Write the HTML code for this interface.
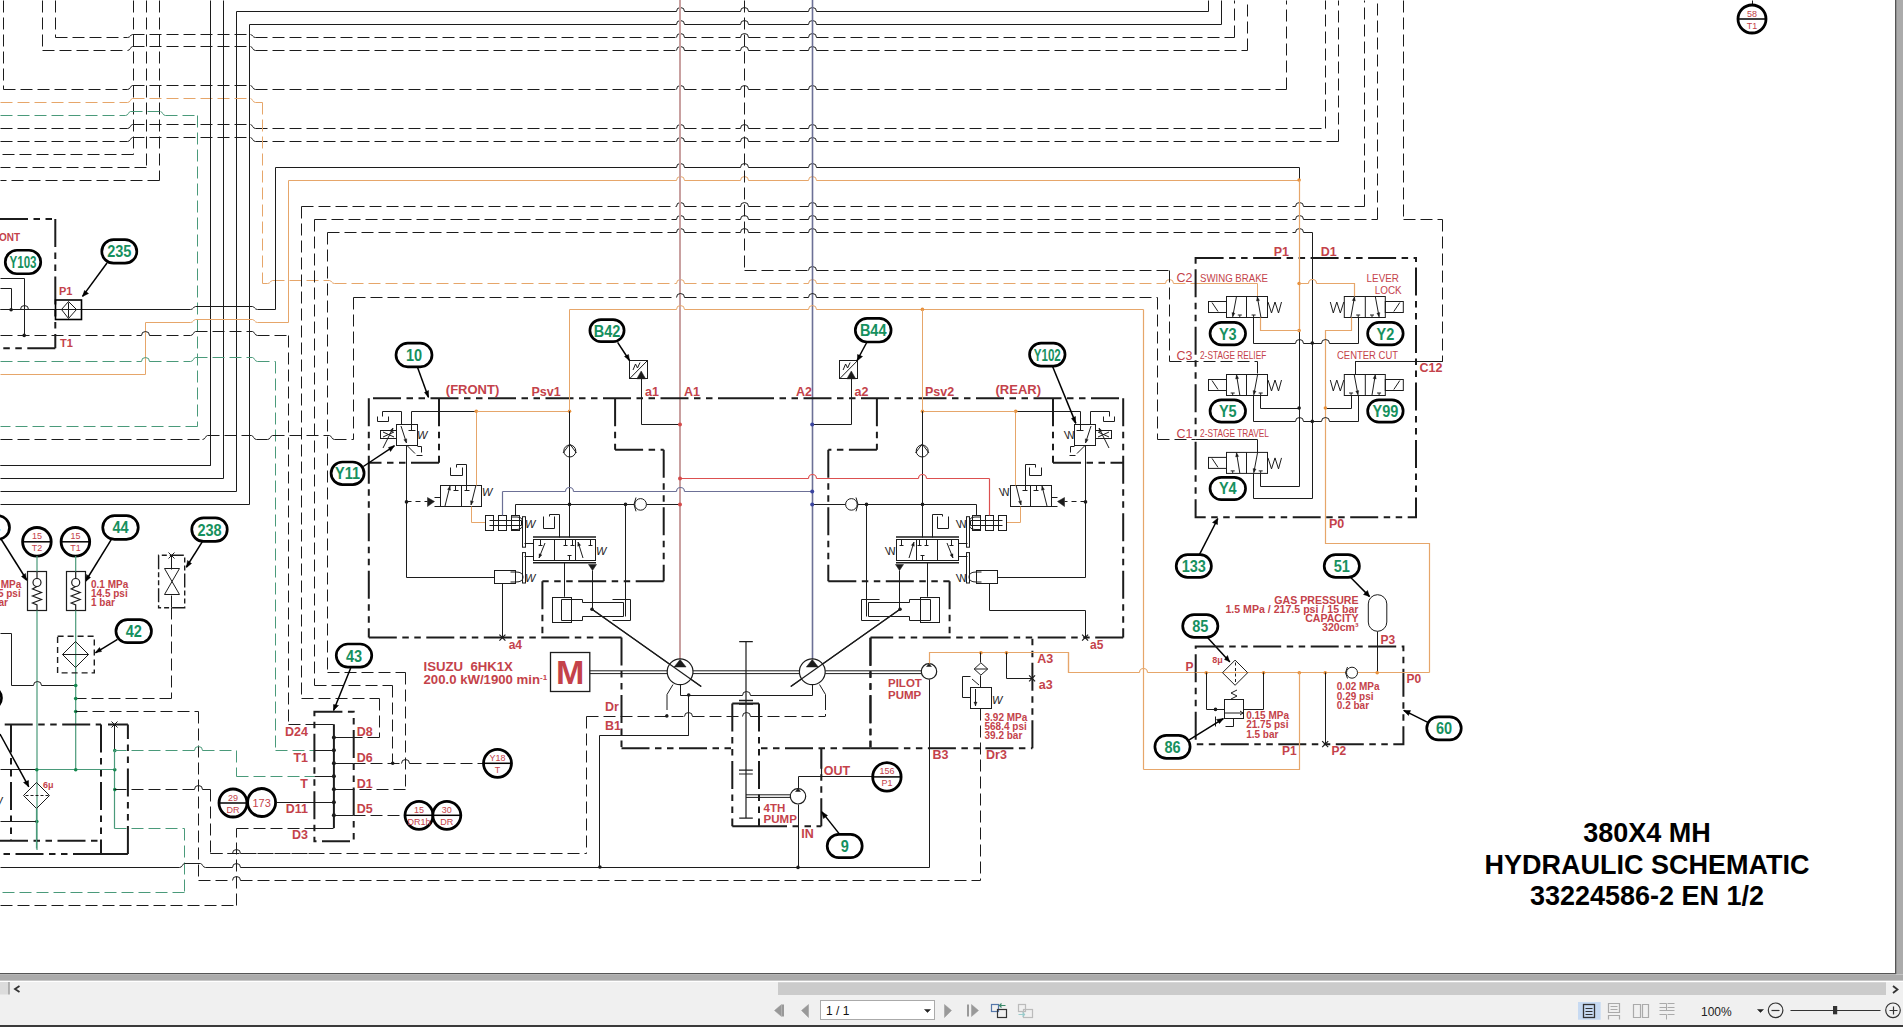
<!DOCTYPE html>
<html><head><meta charset="utf-8"><style>
html,body{margin:0;padding:0;width:1903px;height:1027px;overflow:hidden;background:#fff}
svg{position:absolute;left:0;top:0}
</style></head><body>
<svg width="1903" height="1027" viewBox="0 0 1903 1027">
<path d="M 236.5 11.5 L 676.5 11.5 M 684.5 11.5 L 740.5 11.5 M 748.5 11.5 L 808.5 11.5 M 816.5 11.5 L 1208.5 11.5 M 236.5 11.5 V 491.5 H 0.5 M 1208.5 11.5 V 0.5" stroke="#1c1c1c" stroke-width="1" fill="none"/>
<path d="M 676.5 11.5 A 4 4 0 0 1 684.5 11.5 M 740.5 11.5 A 4 4 0 0 1 748.5 11.5 M 808.5 11.5 A 4 4 0 0 1 816.5 11.5" stroke="#1c1c1c" stroke-width="1" fill="none"/>
<path d="M 249.5 24.5 L 676.5 24.5 M 684.5 24.5 L 740.5 24.5 M 748.5 24.5 L 808.5 24.5 M 816.5 24.5 L 1221.5 24.5 M 249.5 24.5 V 504.5 H 0.5 M 1221.5 24.5 V 0.5" stroke="#1c1c1c" stroke-width="1" fill="none"/>
<path d="M 676.5 24.5 A 4 4 0 0 1 684.5 24.5 M 740.5 24.5 A 4 4 0 0 1 748.5 24.5 M 808.5 24.5 A 4 4 0 0 1 816.5 24.5" stroke="#1c1c1c" stroke-width="1" fill="none"/>
<path d="M55.5 0.5 L55.5 37.5 M55.5 37.5 L127.5 37.5 M132.5 34.5 L250.5 34.5 M255.5 37.5 L676.5 37.5 M684.5 37.5 L740.5 37.5 M748.5 37.5 L808.5 37.5 M816.5 37.5 L1234.5 37.5 M1234.5 37.5 L1234.5 0.5" stroke="#1c1c1c" stroke-width="1" fill="none" stroke-dasharray="12 5"/>
<path d="M 127.5 37.5 C 130.5 37.5 130.5 34.5 132.5 34.5 M 250.5 34.5 C 252.5 34.5 252.5 37.5 255.5 37.5 M 676.5 37.5 A 4 4 0 0 1 684.5 37.5 M 740.5 37.5 A 4 4 0 0 1 748.5 37.5 M 808.5 37.5 A 4 4 0 0 1 816.5 37.5" stroke="#1c1c1c" stroke-width="1" fill="none"/>
<path d="M42.5 0.5 L42.5 50.5 M42.5 50.5 L127.5 50.5 M132.5 46.5 L250.5 46.5 M255.5 50.5 L676.5 50.5 M684.5 50.5 L740.5 50.5 M748.5 50.5 L808.5 50.5 M816.5 50.5 L1247.5 50.5 M1247.5 50.5 L1247.5 0.5" stroke="#1c1c1c" stroke-width="1" fill="none" stroke-dasharray="12 5"/>
<path d="M 127.5 50.5 C 130.5 50.5 130.5 46.5 132.5 46.5 M 250.5 46.5 C 252.5 46.5 252.5 50.5 255.5 50.5 M 676.5 50.5 A 4 4 0 0 1 684.5 50.5 M 740.5 50.5 A 4 4 0 0 1 748.5 50.5 M 808.5 50.5 A 4 4 0 0 1 816.5 50.5" stroke="#1c1c1c" stroke-width="1" fill="none"/>
<path d="M3.5 0.5 L3.5 89.5 M3.5 89.5 L127.5 89.5 M132.5 85.5 L250.5 85.5 M255.5 89.5 L676.5 89.5 M684.5 89.5 L740.5 89.5 M748.5 89.5 L808.5 89.5 M816.5 89.5 L1286.5 89.5 M1286.5 89.5 L1286.5 0.5" stroke="#1c1c1c" stroke-width="1" fill="none" stroke-dasharray="12 5"/>
<path d="M 127.5 89.5 C 130.5 89.5 130.5 85.5 132.5 85.5 M 250.5 85.5 C 252.5 85.5 252.5 89.5 255.5 89.5 M 676.5 89.5 A 4 4 0 0 1 684.5 89.5 M 740.5 89.5 A 4 4 0 0 1 748.5 89.5 M 808.5 89.5 A 4 4 0 0 1 816.5 89.5" stroke="#1c1c1c" stroke-width="1" fill="none"/>
<path d="M0.5 128.5 L127.5 128.5 M132.5 124.5 L250.5 124.5 M255.5 128.5 L676.5 128.5 M684.5 128.5 L740.5 128.5 M748.5 128.5 L808.5 128.5 M816.5 128.5 L1325.5 128.5 M1325.5 128.5 L1325.5 0.5" stroke="#1c1c1c" stroke-width="1" fill="none" stroke-dasharray="12 5"/>
<path d="M 127.5 128.5 C 130.5 128.5 130.5 124.5 132.5 124.5 M 250.5 124.5 C 252.5 124.5 252.5 128.5 255.5 128.5 M 676.5 128.5 A 4 4 0 0 1 684.5 128.5 M 740.5 128.5 A 4 4 0 0 1 748.5 128.5 M 808.5 128.5 A 4 4 0 0 1 816.5 128.5" stroke="#1c1c1c" stroke-width="1" fill="none"/>
<path d="M0.5 141.5 L127.5 141.5 M132.5 137.5 L250.5 137.5 M255.5 141.5 L676.5 141.5 M684.5 141.5 L740.5 141.5 M748.5 141.5 L808.5 141.5 M816.5 141.5 L1338.5 141.5 M1338.5 141.5 L1338.5 0.5" stroke="#1c1c1c" stroke-width="1" fill="none" stroke-dasharray="12 5"/>
<path d="M 127.5 141.5 C 130.5 141.5 130.5 137.5 132.5 137.5 M 250.5 137.5 C 252.5 137.5 252.5 141.5 255.5 141.5 M 676.5 141.5 A 4 4 0 0 1 684.5 141.5 M 740.5 141.5 A 4 4 0 0 1 748.5 141.5 M 808.5 141.5 A 4 4 0 0 1 816.5 141.5" stroke="#1c1c1c" stroke-width="1" fill="none"/>
<path d="M133.5 0.5 L133.5 154.5 M133.5 154.5 L0.5 154.5" stroke="#1c1c1c" stroke-width="1" fill="none" stroke-dasharray="12 5"/>
<path d="M146.5 0.5 L146.5 167.5 M146.5 167.5 L0.5 167.5" stroke="#1c1c1c" stroke-width="1" fill="none" stroke-dasharray="12 5"/>
<path d="M159.5 0.5 L159.5 180.5 M159.5 180.5 L0.5 180.5" stroke="#1c1c1c" stroke-width="1" fill="none" stroke-dasharray="12 5"/>
<path d="M0.5 102.5 L127.5 102.5 M132.5 98.5 L250.5 98.5 M255.5 102.5 L262.5 102.5 M262.5 102.5 L262.5 283.5" stroke="#e6a66a" stroke-width="1" fill="none" stroke-dasharray="12 5"/>
<path d="M 127.5 102.5 C 130.5 102.5 130.5 98.5 132.5 98.5 M 250.5 98.5 C 252.5 98.5 252.5 102.5 255.5 102.5" stroke="#e6a66a" stroke-width="1" fill="none"/>
<path d="M262.5 283.5 L267.5 283.5 M272.5 280.5 L329.5 280.5 M334.5 283.5 L676.5 283.5 M684.5 283.5 L808.5 283.5 M816.5 283.5 L1165.5 283.5 M1173.5 283.5 L1195.5 283.5" stroke="#e6a66a" stroke-width="1" fill="none" stroke-dasharray="12 5"/>
<path d="M 267.5 283.5 C 270.5 283.5 270.5 280.5 272.5 280.5 M 329.5 280.5 C 331.5 280.5 331.5 283.5 334.5 283.5 M 676.5 283.5 A 4 4 0 0 1 684.5 283.5 M 808.5 283.5 A 4 4 0 0 1 816.5 283.5 M 1165.5 283.5 A 4 4 0 0 1 1173.5 283.5" stroke="#e6a66a" stroke-width="1" fill="none"/>
<path d="M 1195.5 283.5 H 1257.5 V 296.5" stroke="#e6a66a" stroke-width="1" fill="none"/>
<path d="M0.5 115.5 L125.5 115.5 M130.5 111.5 L160.5 111.5 M165.5 115.5 L197.5 115.5 M197.5 115.5 L197.5 426.5 M197.5 426.5 L0.5 426.5" stroke="#4a9a7a" stroke-width="1" fill="none" stroke-dasharray="12 5"/>
<path d="M 125.5 115.5 C 128.5 115.5 128.5 111.5 130.5 111.5 M 160.5 111.5 C 162.5 111.5 162.5 115.5 165.5 115.5" stroke="#4a9a7a" stroke-width="1" fill="none"/>
<path d="M 210.5 0.5 V 465.5 H 0.5" stroke="#1c1c1c" stroke-width="1" fill="none"/>
<path d="M 223.5 0.5 V 478.5 H 0.5" stroke="#1c1c1c" stroke-width="1" fill="none"/>
<path d="M 275.5 167.5 L 676.5 167.5 M 684.5 167.5 L 740.5 167.5 M 748.5 167.5 L 808.5 167.5 M 816.5 167.5 L 1299.5 167.5 V 180.5" stroke="#1c1c1c" stroke-width="1" fill="none"/>
<path d="M 676.5 167.5 A 4 4 0 0 1 684.5 167.5 M 740.5 167.5 A 4 4 0 0 1 748.5 167.5 M 808.5 167.5 A 4 4 0 0 1 816.5 167.5" stroke="#1c1c1c" stroke-width="1" fill="none"/>
<path d="M 288.5 180.5 L 676.5 180.5 M 684.5 180.5 L 740.5 180.5 M 748.5 180.5 L 808.5 180.5 M 816.5 180.5 L 1299.5 180.5" stroke="#e6a66a" stroke-width="1" fill="none"/>
<path d="M 676.5 180.5 A 4 4 0 0 1 684.5 180.5 M 740.5 180.5 A 4 4 0 0 1 748.5 180.5 M 808.5 180.5 A 4 4 0 0 1 816.5 180.5" stroke="#e6a66a" stroke-width="1" fill="none"/>
<circle cx="1299.1" cy="180" r="1.8" fill="#e8903a"/>
<path d="M 275.5 167.5 V 309.5" stroke="#1c1c1c" stroke-width="1" fill="none"/>
<path d="M 0.5 309.5 L 190.5 309.5 M 195.5 306.5 L 252.5 306.5 M 257.5 309.5 L 275.5 309.5" stroke="#1c1c1c" stroke-width="1" fill="none"/>
<path d="M 190.5 309.5 C 193.5 309.5 193.5 306.5 195.5 306.5 M 252.5 306.5 C 254.5 306.5 254.5 309.5 257.5 309.5" stroke="#1c1c1c" stroke-width="1" fill="none"/>
<path d="M 288.5 180.5 V 322.5" stroke="#e6a66a" stroke-width="1" fill="none"/>
<path d="M 145.5 322.5 L 190.5 322.5 M 195.5 319.5 L 252.5 319.5 M 257.5 322.5 L 288.5 322.5 M 145.5 322.5 V 374.5 H 0.5" stroke="#e6a66a" stroke-width="1" fill="none"/>
<path d="M 190.5 322.5 C 193.5 322.5 193.5 319.5 195.5 319.5 M 252.5 319.5 C 254.5 319.5 254.5 322.5 257.5 322.5" stroke="#e6a66a" stroke-width="1" fill="none"/>
<path d="M301.5 206.5 L676.5 206.5 M684.5 206.5 L740.5 206.5 M748.5 206.5 L808.5 206.5 M816.5 206.5 L1295.5 206.5 M1303.5 206.5 L1364.5 206.5 M1364.5 206.5 L1364.5 0.5 M301.5 206.5 L301.5 698.5 M301.5 698.5 L379.5 698.5 M379.5 698.5 L379.5 737.5 M379.5 737.5 L353.5 737.5" stroke="#1c1c1c" stroke-width="1" fill="none" stroke-dasharray="12 5"/>
<path d="M 676.5 206.5 A 4 4 0 0 1 684.5 206.5 M 740.5 206.5 A 4 4 0 0 1 748.5 206.5 M 808.5 206.5 A 4 4 0 0 1 816.5 206.5 M 1295.5 206.5 A 4 4 0 0 1 1303.5 206.5" stroke="#1c1c1c" stroke-width="1" fill="none"/>
<path d="M314.5 219.5 L676.5 219.5 M684.5 219.5 L740.5 219.5 M748.5 219.5 L808.5 219.5 M816.5 219.5 L1295.5 219.5 M1303.5 219.5 L1377.5 219.5 M1377.5 219.5 L1377.5 0.5 M314.5 219.5 L314.5 685.5 M314.5 685.5 L392.5 685.5 M392.5 685.5 L392.5 763.5" stroke="#1c1c1c" stroke-width="1" fill="none" stroke-dasharray="12 5"/>
<path d="M 676.5 219.5 A 4 4 0 0 1 684.5 219.5 M 740.5 219.5 A 4 4 0 0 1 748.5 219.5 M 808.5 219.5 A 4 4 0 0 1 816.5 219.5 M 1295.5 219.5 A 4 4 0 0 1 1303.5 219.5" stroke="#1c1c1c" stroke-width="1" fill="none"/>
<path d="M327.5 232.5 L676.5 232.5 M684.5 232.5 L740.5 232.5 M748.5 232.5 L808.5 232.5 M816.5 232.5 L1295.5 232.5 M1303.5 232.5 L1312.5 232.5 M327.5 232.5 L327.5 672.5 M327.5 672.5 L405.5 672.5 M405.5 672.5 L405.5 789.5 M405.5 789.5 L353.5 789.5" stroke="#1c1c1c" stroke-width="1" fill="none" stroke-dasharray="12 5"/>
<path d="M 676.5 232.5 A 4 4 0 0 1 684.5 232.5 M 740.5 232.5 A 4 4 0 0 1 748.5 232.5 M 808.5 232.5 A 4 4 0 0 1 816.5 232.5 M 1295.5 232.5 A 4 4 0 0 1 1303.5 232.5" stroke="#1c1c1c" stroke-width="1" fill="none"/>
<path d="M1403.5 0.5 L1403.5 219.5 M1403.5 219.5 L1442.5 219.5 M1442.5 219.5 L1442.5 361.5 M1442.5 361.5 L1355.5 361.5 M1355.5 361.5 L1355.5 374.5" stroke="#1c1c1c" stroke-width="1" fill="none" stroke-dasharray="12 5"/>
<path d="M744.5 0.5 L744.5 270.5 M744.5 270.5 L808.5 270.5 M816.5 270.5 L1169.5 270.5 M1169.5 270.5 L1169.5 361.5 M1169.5 361.5 L1257.5 361.5 M1257.5 361.5 L1257.5 374.5" stroke="#1c1c1c" stroke-width="1" fill="none" stroke-dasharray="12 5"/>
<path d="M 808.5 270.5 A 4 4 0 0 1 816.5 270.5" stroke="#1c1c1c" stroke-width="1" fill="none"/>
<path d="M680 0 V659" stroke="#c9a0a0" stroke-width="2" fill="none"/>
<path d="M812.5 0 V659" stroke="#6c7096" stroke-width="1.6" fill="none"/>
<path d="M353.5 297.5 L676.5 297.5 M684.5 297.5 L808.5 297.5 M816.5 297.5 L1157.5 297.5 M1157.5 297.5 L1157.5 439.5 M1157.5 439.5 L1195.5 439.5 M353.5 297.5 L353.5 439.5" stroke="#1c1c1c" stroke-width="1" fill="none" stroke-dasharray="12 5"/>
<path d="M 676.5 297.5 A 4 4 0 0 1 684.5 297.5 M 808.5 297.5 A 4 4 0 0 1 816.5 297.5" stroke="#1c1c1c" stroke-width="1" fill="none"/>
<path d="M 569.5 309.5 L 676.5 309.5 M 684.5 309.5 L 808.5 309.5 M 816.5 309.5 L 1143.5 309.5" stroke="#e6a66a" stroke-width="1" fill="none"/>
<path d="M 676.5 309.5 A 4 4 0 0 1 684.5 309.5 M 808.5 309.5 A 4 4 0 0 1 816.5 309.5" stroke="#e6a66a" stroke-width="1" fill="none"/>
<circle cx="922.4" cy="309.4" r="1.8" fill="#e8903a"/>
<path d="M0.5 335.5 L141.5 335.5 M149.5 335.5 L190.5 335.5 M195.5 331.5 L252.5 331.5 M257.5 335.5 L288.5 335.5 M288.5 335.5 L288.5 724.5 M288.5 724.5 L314.5 724.5" stroke="#1c1c1c" stroke-width="1" fill="none" stroke-dasharray="12 5"/>
<path d="M 141.5 335.5 A 4 4 0 0 1 149.5 335.5 M 190.5 335.5 C 193.5 335.5 193.5 331.5 195.5 331.5 M 252.5 331.5 C 254.5 331.5 254.5 335.5 257.5 335.5" stroke="#1c1c1c" stroke-width="1" fill="none"/>
<path d="M0.5 361.5 L141.5 361.5 M149.5 361.5 L190.5 361.5 M195.5 357.5 L252.5 357.5 M257.5 361.5 L275.5 361.5 M275.5 361.5 L275.5 750.5 M275.5 750.5 L314.5 750.5" stroke="#4a9a7a" stroke-width="1" fill="none" stroke-dasharray="12 5"/>
<path d="M 141.5 361.5 A 4 4 0 0 1 149.5 361.5 M 190.5 361.5 C 193.5 361.5 193.5 357.5 195.5 357.5 M 252.5 357.5 C 254.5 357.5 254.5 361.5 257.5 361.5" stroke="#4a9a7a" stroke-width="1" fill="none"/>
<path d="M0.5 439.5 L202.5 439.5 M207.5 435.5 L251.5 435.5 M256.5 439.5 L267.5 439.5 M272.5 435.5 L329.5 435.5 M334.5 439.5 L353.5 439.5" stroke="#1c1c1c" stroke-width="1" fill="none" stroke-dasharray="12 5"/>
<path d="M 202.5 439.5 C 205.5 439.5 205.5 435.5 207.5 435.5 M 251.5 435.5 C 253.5 435.5 253.5 439.5 256.5 439.5 M 267.5 439.5 C 270.5 439.5 270.5 435.5 272.5 435.5 M 329.5 435.5 C 331.5 435.5 331.5 439.5 334.5 439.5" stroke="#1c1c1c" stroke-width="1" fill="none"/>
<path d="M 1752.5 0.5 V 5.5" stroke="#1c1c1c" stroke-width="1" fill="none"/>
<circle cx="1752" cy="19" r="14" stroke="#000" stroke-width="2.8" fill="#fff"/>
<path d="M1738 19 H1766" stroke="#000" stroke-width="1.5" fill="none"/>
<text x="1752" y="16.5" fill="#c4424a" text-anchor="middle" style="font-family:&quot;Liberation Sans&quot;,sans-serif;font-size:9px;font-weight:normal">58</text>
<text x="1752" y="28.5" fill="#c4424a" text-anchor="middle" style="font-family:&quot;Liberation Sans&quot;,sans-serif;font-size:9px;font-weight:normal">T1</text>
<path d="M0 219 L55.3 219 M55.3 219 L55.3 348.3 M55.3 348.3 L0 348.3" stroke="#1c1c1c" stroke-width="2" fill="none" stroke-dasharray="28 5.5 6.5 5.5 6.5 5.5"/>
<text x="-1" y="241" fill="#c4424a" text-anchor="start" style="font-family:&quot;Liberation Sans&quot;,sans-serif;font-size:10px;font-weight:bold">ONT</text>
<rect x="5.25" y="250.25" width="35.5" height="23.5" rx="11.75" ry="11.75" stroke="#000" stroke-width="2.7" fill="#fff"/>
<text x="23" y="267.9" fill="#16905e" text-anchor="middle" textLength="27" lengthAdjust="spacingAndGlyphs" style="font-family:&quot;Liberation Sans&quot;,sans-serif;font-size:16.5px;font-weight:bold">Y103</text>
<rect x="101.8" y="239.6" width="35" height="23.6" rx="11.8" ry="11.8" stroke="#000" stroke-width="2.7" fill="#fff"/>
<text x="119.3" y="257.3" fill="#16905e" text-anchor="middle" textLength="24.22" lengthAdjust="spacingAndGlyphs" style="font-family:&quot;Liberation Sans&quot;,sans-serif;font-size:16.5px;font-weight:bold">235</text>
<path d="M107 263 L82.5 296.4" stroke="#000" stroke-width="1.5" fill="none"/>
<path d="M 82.5 296.5 L 84.5 290.5 L 88.5 293.5 Z" stroke="#000" stroke-width="0.5" fill="#000"/>
<text x="59" y="295" fill="#c4424a" text-anchor="start" style="font-family:&quot;Liberation Sans&quot;,sans-serif;font-size:11px;font-weight:bold">P1</text>
<text x="60" y="347" fill="#c4424a" text-anchor="start" style="font-family:&quot;Liberation Sans&quot;,sans-serif;font-size:11px;font-weight:bold">T1</text>
<rect x="55.5" y="300" width="26" height="19.5" stroke="#000" stroke-width="1.6" fill="none"/>
<path d="M 68.5 301.5 L 76.5 309.5 L 68.5 318.5 L 61.5 309.5 Z M 68.5 302.5 V 317.5" stroke="#1c1c1c" stroke-width="1" fill="none"/>
<path d="M 0.5 309.5 L 20.5 309.5 M 28.5 309.5 L 55.5 309.5" stroke="#1c1c1c" stroke-width="1" fill="none"/>
<path d="M 20.5 309.5 A 4 4 0 0 1 28.5 309.5" stroke="#1c1c1c" stroke-width="1" fill="none"/>
<path d="M 0.5 288.5 H 11.5 V 309.5 M 0.5 278.5 H 24.5 V 335.5" stroke="#1c1c1c" stroke-width="1" fill="none"/>
<circle cx="11.1" cy="309.7" r="1.8" fill="#1c1c1c"/>
<circle cx="24.2" cy="335.4" r="1.8" fill="#1c1c1c"/>
<path d="M 0.5 465.5 H 210.5" stroke="#1c1c1c" stroke-width="1" fill="none"/>
<rect x="-25.5" y="515.7" width="35" height="23.6" rx="11.8" ry="11.8" stroke="#000" stroke-width="2.7" fill="#fff"/>
<text x="-8" y="533.4" fill="#16905e" text-anchor="middle" textLength="16.15" lengthAdjust="spacingAndGlyphs" style="font-family:&quot;Liberation Sans&quot;,sans-serif;font-size:16.5px;font-weight:bold">34</text>
<path d="M1 539 L26.8 580" stroke="#000" stroke-width="1.5" fill="none"/>
<path d="M 26.5 580.5 L 21.5 576.5 L 25.5 573.5 Z" stroke="#000" stroke-width="0.5" fill="#000"/>
<circle cx="36.9" cy="541.8" r="14.3" stroke="#000" stroke-width="2.8" fill="#fff"/>
<path d="M22.6 541.8 H51.2" stroke="#000" stroke-width="1.5" fill="none"/>
<text x="36.9" y="539.3" fill="#c4424a" text-anchor="middle" style="font-family:&quot;Liberation Sans&quot;,sans-serif;font-size:9px;font-weight:normal">15</text>
<text x="36.9" y="551.3" fill="#c4424a" text-anchor="middle" style="font-family:&quot;Liberation Sans&quot;,sans-serif;font-size:9px;font-weight:normal">T2</text>
<circle cx="75.4" cy="541.8" r="14.3" stroke="#000" stroke-width="2.8" fill="#fff"/>
<path d="M61.1 541.8 H89.7" stroke="#000" stroke-width="1.5" fill="none"/>
<text x="75.4" y="539.3" fill="#c4424a" text-anchor="middle" style="font-family:&quot;Liberation Sans&quot;,sans-serif;font-size:9px;font-weight:normal">15</text>
<text x="75.4" y="551.3" fill="#c4424a" text-anchor="middle" style="font-family:&quot;Liberation Sans&quot;,sans-serif;font-size:9px;font-weight:normal">T1</text>
<rect x="102.75" y="515.7" width="35.5" height="23.6" rx="11.8" ry="11.8" stroke="#000" stroke-width="2.7" fill="#fff"/>
<text x="120.5" y="533.4" fill="#16905e" text-anchor="middle" textLength="16.15" lengthAdjust="spacingAndGlyphs" style="font-family:&quot;Liberation Sans&quot;,sans-serif;font-size:16.5px;font-weight:bold">44</text>
<path d="M111.4 539.3 L85.7 581" stroke="#000" stroke-width="1.5" fill="none"/>
<path d="M 85.5 581.5 L 86.5 574.5 L 90.5 577.5 Z" stroke="#000" stroke-width="0.5" fill="#000"/>
<rect x="191.75" y="517.8" width="35.5" height="23.6" rx="11.8" ry="11.8" stroke="#000" stroke-width="2.7" fill="#fff"/>
<text x="209.5" y="535.5" fill="#16905e" text-anchor="middle" textLength="24.22" lengthAdjust="spacingAndGlyphs" style="font-family:&quot;Liberation Sans&quot;,sans-serif;font-size:16.5px;font-weight:bold">238</text>
<path d="M202.5 541.4 L186.4 567" stroke="#000" stroke-width="1.5" fill="none"/>
<path d="M 186.5 567.5 L 187.5 560.5 L 191.5 563.5 Z" stroke="#000" stroke-width="0.5" fill="#000"/>
<rect x="27.5" y="571.5" width="19" height="39" stroke="#1c1c1c" stroke-width="1.2" fill="none"/>
<circle cx="37" cy="582.5" r="4" stroke="#1c1c1c" stroke-width="1.2" fill="none"/>
<path d="M37 571.5 V578.5 M37 586.5 L32.5 589 L41.5 592.5 L32.5 596 L41.5 599.5 L32.5 603 L37 605 V610.5" stroke="#1c1c1c" stroke-width="1.2" fill="none"/>
<path d="M37 556 V571.5 M37 610.5 V850" stroke="#4a9a7a" stroke-width="1.2" fill="none"/>
<rect x="66.5" y="571.5" width="19" height="39" stroke="#1c1c1c" stroke-width="1.2" fill="none"/>
<circle cx="75.7" cy="582.5" r="4" stroke="#1c1c1c" stroke-width="1.2" fill="none"/>
<path d="M75.7 571.5 V578.5 M75.7 586.5 L71.2 589 L80.2 592.5 L71.2 596 L80.2 599.5 L71.2 603 L75.7 605 V610.5" stroke="#1c1c1c" stroke-width="1.2" fill="none"/>
<path d="M75.7 556 V571.5 M75.7 610.5 V769.8" stroke="#4a9a7a" stroke-width="1.2" fill="none"/>
<text x="91" y="588" fill="#c4424a" text-anchor="start" style="font-family:&quot;Liberation Sans&quot;,sans-serif;font-size:10px;font-weight:bold">0.1 MPa</text>
<text x="-16" y="588" fill="#c4424a" text-anchor="start" style="font-family:&quot;Liberation Sans&quot;,sans-serif;font-size:10px;font-weight:bold">0.1 MPa</text>
<text x="91" y="597.2" fill="#c4424a" text-anchor="start" style="font-family:&quot;Liberation Sans&quot;,sans-serif;font-size:10px;font-weight:bold">14.5 psi</text>
<text x="-16" y="597.2" fill="#c4424a" text-anchor="start" style="font-family:&quot;Liberation Sans&quot;,sans-serif;font-size:10px;font-weight:bold">14.5 psi</text>
<text x="91" y="606.4" fill="#c4424a" text-anchor="start" style="font-family:&quot;Liberation Sans&quot;,sans-serif;font-size:10px;font-weight:bold">1 bar</text>
<text x="-16" y="606.4" fill="#c4424a" text-anchor="start" style="font-family:&quot;Liberation Sans&quot;,sans-serif;font-size:10px;font-weight:bold">1 bar</text>
<path d="M158.6 555.3 V607.8 H184.7 V555.3 Z" stroke="#1c1c1c" stroke-width="1.4" fill="none" stroke-dasharray="14 3 5 3 5 3"/>
<path d="M 164.5 568.5 H 179.5 L 164.5 594.5 H 179.5 Z" stroke="#1c1c1c" stroke-width="1" fill="none"/>
<path d="M 171.5 555.5 V 569.5 M 171.5 595.5 V 607.5" stroke="#1c1c1c" stroke-width="1" fill="none"/>
<path d="M 168.5 552.5 L 174.5 558.5 M 174.5 552.5 L 168.5 558.5" stroke="#1c1c1c" stroke-width="1" fill="none"/>
<path d="M171.5 607.5 L171.5 698.5 M171.5 698.5 L75.5 698.5" stroke="#1c1c1c" stroke-width="1" fill="none" stroke-dasharray="12 5"/>
<path d="M57.6 636.3 H94.3 V672.9 H57.6 Z" stroke="#1c1c1c" stroke-width="1.4" fill="none" stroke-dasharray="6 4"/>
<path d="M 75.5 641.5 L 88.5 654.5 L 75.5 667.5 L 62.5 654.5 Z M 62.5 654.5 H 88.5" stroke="#1c1c1c" stroke-width="1" fill="none"/>
<rect x="115.95" y="619.7" width="35.5" height="23" rx="11.5" ry="11.5" stroke="#000" stroke-width="2.7" fill="#fff"/>
<text x="133.7" y="637.1" fill="#16905e" text-anchor="middle" textLength="16.15" lengthAdjust="spacingAndGlyphs" style="font-family:&quot;Liberation Sans&quot;,sans-serif;font-size:16.5px;font-weight:bold">42</text>
<path d="M117.5 639.4 L95.4 652.8" stroke="#000" stroke-width="1.5" fill="none"/>
<path d="M 95.5 652.5 L 99.5 647.5 L 101.5 651.5 Z" stroke="#000" stroke-width="0.5" fill="#000"/>
<path d="M 0.5 633.5 H 11.5 V 685.5 L 33.5 685.5 M 41.5 685.5 L 75.5 685.5" stroke="#1c1c1c" stroke-width="1" fill="none"/>
<path d="M 33.5 685.5 A 4 4 0 0 1 41.5 685.5" stroke="#1c1c1c" stroke-width="1" fill="none"/>
<circle cx="75.7" cy="685.5" r="1.8" fill="#15884f"/>
<circle cx="75.7" cy="698.6" r="1.8" fill="#15884f"/>
<circle cx="75.7" cy="711.5" r="1.8" fill="#15884f"/>
<path d="M75.5 711.5 L198.5 711.5 M198.5 711.5 L198.5 880.5" stroke="#1c1c1c" stroke-width="1" fill="none" stroke-dasharray="12 5"/>
<path d="M4.7 724.6 L101 724.6 M101 724.6 L101 853.9 M101 853.9 L0 853.9" stroke="#1c1c1c" stroke-width="2" fill="none" stroke-dasharray="28 5.5 6.5 5.5 6.5 5.5"/>
<path d="M11 724.6 L11 840.8" stroke="#1c1c1c" stroke-width="2" fill="none" stroke-dasharray="28 5.5 6.5 5.5 6.5 5.5"/>
<path d="M0 840.8 L101 840.8" stroke="#1c1c1c" stroke-width="2" fill="none" stroke-dasharray="28 5.5 6.5 5.5 6.5 5.5"/>
<path d="M101 853.9 L127.9 853.9 M127.9 853.9 L127.9 724.6 M127.9 724.6 L108 724.6" stroke="#1c1c1c" stroke-width="2" fill="none" stroke-dasharray="28 5.5 6.5 5.5 6.5 5.5"/>
<path d="M 111.5 721.5 L 117.5 727.5 M 117.5 721.5 L 111.5 727.5 M 114.5 724.5 V 750.5" stroke="#1c1c1c" stroke-width="1" fill="none"/>
<path d="M 0.5 769.5 H 36.5" stroke="#1c1c1c" stroke-width="1" fill="none"/>
<path d="M 36.5 769.5 H 114.5 V 828.5" stroke="#4a9a7a" stroke-width="1.2" fill="none"/>
<circle cx="36.8" cy="769.8" r="1.8" fill="#15884f"/>
<circle cx="75.7" cy="769.8" r="1.8" fill="#15884f"/>
<circle cx="114.8" cy="750.6" r="1.8" fill="#15884f"/>
<circle cx="114.8" cy="769.8" r="1.8" fill="#15884f"/>
<circle cx="114.8" cy="789.6" r="1.8" fill="#15884f"/>
<path d="M 114.5 750.5 V 769.5" stroke="#4a9a7a" stroke-width="1.2" fill="none"/>
<path d="M114.5 750.5 L194.5 750.5 M202.5 750.5 L236.5 750.5 M236.5 750.5 L236.5 776.5 M236.5 776.5 L314.5 776.5" stroke="#4a9a7a" stroke-width="1" fill="none" stroke-dasharray="12 5"/>
<path d="M 194.5 750.5 A 4 4 0 0 1 202.5 750.5" stroke="#4a9a7a" stroke-width="1" fill="none"/>
<path d="M114.5 828.5 L184.5 828.5 M184.5 828.5 L184.5 892.5 M184.5 892.5 L0.5 892.5" stroke="#4a9a7a" stroke-width="1" fill="none" stroke-dasharray="12 5"/>
<path d="M 36.5 782.5 L 49.5 795.5 L 36.5 808.5 L 23.5 795.5 Z" stroke="#1c1c1c" stroke-width="1" fill="none"/>
<path d="M25.5 795.5 L48.5 795.5" stroke="#1c1c1c" stroke-width="1" fill="none" stroke-dasharray="3 2"/>
<text x="43" y="788" fill="#c4424a" text-anchor="start" style="font-family:&quot;Liberation Sans&quot;,sans-serif;font-size:9px;font-weight:bold">6μ</text>
<circle cx="36.8" cy="821.5" r="1.8" fill="#15884f"/>
<path d="M 0.5 821.5 H 36.5" stroke="#1c1c1c" stroke-width="1" fill="none"/>
<path d="M 36.5 808.5 V 848.5" stroke="#4a9a7a" stroke-width="1.2" fill="none"/>
<path d="M0 734 L28.8 786.8" stroke="#000" stroke-width="1.5" fill="none"/>
<path d="M 28.5 786.5 L 23.5 782.5 L 28.5 780.5 Z" stroke="#000" stroke-width="0.5" fill="#000"/>
<path d="M114.5 789.5 L194.5 789.5 M202.5 789.5 L210.5 789.5 M210.5 789.5 L210.5 853.5 M210.5 853.5 L232.5 853.5 M240.5 853.5 L320.5 853.5" stroke="#1c1c1c" stroke-width="1" fill="none" stroke-dasharray="12 5"/>
<path d="M 194.5 789.5 A 4 4 0 0 1 202.5 789.5 M 232.5 853.5 A 4 4 0 0 1 240.5 853.5" stroke="#1c1c1c" stroke-width="1" fill="none"/>
<path d="M198.5 880.5 L232.5 880.5 M240.5 880.5 L980.5 880.5" stroke="#1c1c1c" stroke-width="1" fill="none" stroke-dasharray="12 5"/>
<path d="M 232.5 880.5 A 4 4 0 0 1 240.5 880.5" stroke="#1c1c1c" stroke-width="1" fill="none"/>
<path d="M0.5 905.5 L236.5 905.5 M236.5 905.5 L236.5 828.5 M236.5 828.5 L314.5 828.5" stroke="#1c1c1c" stroke-width="1" fill="none" stroke-dasharray="12 5"/>
<circle cx="233" cy="803" r="14" stroke="#000" stroke-width="2.8" fill="#fff"/>
<path d="M219 803 H247" stroke="#000" stroke-width="1.5" fill="none"/>
<text x="233" y="800.5" fill="#c4424a" text-anchor="middle" style="font-family:&quot;Liberation Sans&quot;,sans-serif;font-size:9px;font-weight:normal">29</text>
<text x="233" y="812.5" fill="#c4424a" text-anchor="middle" style="font-family:&quot;Liberation Sans&quot;,sans-serif;font-size:9px;font-weight:normal">DR</text>
<circle cx="261.6" cy="802.5" r="14" stroke="#000" stroke-width="2.8" fill="#fff"/>
<text x="261.6" y="806.5" fill="#c4424a" text-anchor="middle" style="font-family:&quot;Liberation Sans&quot;,sans-serif;font-size:11px;font-weight:normal">173</text>
<path d="M 276.5 802.5 H 334.5" stroke="#1c1c1c" stroke-width="1" fill="none"/>
<rect x="-33.5" y="686.5" width="35" height="23" rx="11.5" ry="11.5" stroke="#000" stroke-width="2.7" fill="#fff"/>
<text x="-8" y="804.5" fill="#1c1c1c" style="font-family:&quot;Liberation Sans&quot;,sans-serif;font-size:11px;font-style:italic">W</text>
<path d="M746 398.2 L368.8 398.2 M368.8 398.2 L368.8 637.6 M368.8 637.6 L621.5 637.6 M621.5 637.6 L621.5 748.3 M621.5 748.3 L731.7 748.3" stroke="#1c1c1c" stroke-width="2" fill="none" stroke-dasharray="28 5.5 6.5 5.5 6.5 5.5"/>
<path d="M439 398.2 L439 462.7 M439 462.7 L368.8 462.7" stroke="#1c1c1c" stroke-width="2" fill="none" stroke-dasharray="28 5.5 6.5 5.5 6.5 5.5"/>
<path d="M615.1 398.2 L615.1 449.8 M615.1 449.8 L663.7 449.8 M663.7 449.8 L663.7 581.2 M663.7 581.2 L542.4 581.2 M542.4 581.2 L542.4 637.6" stroke="#1c1c1c" stroke-width="2" fill="none" stroke-dasharray="28 5.5 6.5 5.5 6.5 5.5"/>
<path d="M 377.5 416.5 V 421.5 H 388.5 V 416.5" stroke="#1c1c1c" stroke-width="1" fill="none"/>
<path d="M 382.5 416.5 V 411.5 H 401.5 V 424.5" stroke="#1c1c1c" stroke-width="1" fill="none"/>
<path d="M 411.5 430.5 V 411.5 H 476.5" stroke="#1c1c1c" stroke-width="1" fill="none"/>
<path d="M 408.5 430.5 H 415.5" stroke="#1c1c1c" stroke-width="1" fill="none"/>
<rect x="396.5" y="424.5" width="21" height="21" stroke="#1c1c1c" stroke-width="1" fill="none"/>
<rect x="380.5" y="430.5" width="16" height="8" stroke="#1c1c1c" stroke-width="1" fill="none"/>
<path d="M383 432 L394 437 M394 432 L383 437" stroke="#1c1c1c" stroke-width="1" fill="none"/>
<path d="M383 448 L393 428" stroke="#1c1c1c" stroke-width="1" fill="none"/>
<path d="M393 428 L392.64 432.29 L389.78 430.86Z" stroke="#1c1c1c" stroke-width="0.3" fill="#1c1c1c"/>
<path d="M401 426 L406.5 443" stroke="#1c1c1c" stroke-width="1" fill="none"/>
<path d="M406.5 443 L403.75 439.69 L406.79 438.7Z" stroke="#1c1c1c" stroke-width="0.3" fill="#1c1c1c"/>
<path d="M406.5 445 L415 453.5" stroke="#1c1c1c" stroke-width="1" fill="none"/>
<path d="M 417.5 446.5 H 421.5 V 452.5 M 416.5 455.5 H 422.5" stroke="#1c1c1c" stroke-width="1" fill="none"/>
<text x="417" y="438.5" fill="#1c1c1c" style="font-family:&quot;Liberation Sans&quot;,sans-serif;font-size:11.0px;font-style:italic">W</text>
<path d="M 406.5 445.5 V 577.5 H 494.5" stroke="#1c1c1c" stroke-width="1" fill="none"/>
<circle cx="406.5" cy="501.9" r="1.8" fill="#1c1c1c"/>
<path d="M 450.5 467.5 V 475.5 H 462.5 V 467.5" stroke="#1c1c1c" stroke-width="1" fill="none"/>
<path d="M 456.5 467.5 V 464.5 H 466.5 V 485.5" stroke="#1c1c1c" stroke-width="1" fill="none"/>
<rect x="440.5" y="485.5" width="41" height="21" stroke="#1c1c1c" stroke-width="1" fill="none"/>
<path d="M 461.5 485.5 V 506.5" stroke="#1c1c1c" stroke-width="1" fill="none"/>
<path d="M445 506 L450 486" stroke="#1c1c1c" stroke-width="1" fill="none"/>
<path d="M450 486 L450.58 490.27 L447.48 489.49Z" stroke="#1c1c1c" stroke-width="0.3" fill="#1c1c1c"/>
<path d="M476 485 L471 505" stroke="#1c1c1c" stroke-width="1" fill="none"/>
<path d="M471 505 L470.42 500.73 L473.52 501.51Z" stroke="#1c1c1c" stroke-width="0.3" fill="#1c1c1c"/>
<path d="M 455.5 485.5 V 490.5 M 453.5 490.5 H 458.5 M 466.5 485.5 V 490.5 M 464.5 490.5 H 469.5" stroke="#1c1c1c" stroke-width="1" fill="none"/>
<text x="482" y="496" fill="#1c1c1c" style="font-family:&quot;Liberation Sans&quot;,sans-serif;font-size:11.0px;font-style:italic">W</text>
<path d="M406.5 501.5 L427.5 501.5" stroke="#1c1c1c" stroke-width="1" fill="none" stroke-dasharray="5 4"/>
<path d="M 427.5 497.5 L 434.5 501.5 L 427.5 506.5 Z" stroke="#1c1c1c" stroke-width="0.5" fill="#1c1c1c"/>
<path d="M 434.5 497.5 H 440.5 M 434.5 506.5 H 440.5" stroke="#1c1c1c" stroke-width="1" fill="none"/>
<path d="M 476.5 411.5 V 485.5" stroke="#e6a66a" stroke-width="1" fill="none"/>
<path d="M 471.5 506.5 V 522.5 H 485.5" stroke="#e6a66a" stroke-width="1" fill="none"/>
<circle cx="476.3" cy="411.3" r="1.8" fill="#e8903a"/>
<path d="M 476.5 411.5 H 569.5" stroke="#e6a66a" stroke-width="1" fill="none"/>
<circle cx="569.5" cy="411.3" r="1.8" fill="#e8903a"/>
<path d="M 569.5 309.5 V 411.5" stroke="#e6a66a" stroke-width="1" fill="none"/>
<rect x="485.5" y="515.5" width="8" height="15" stroke="#1c1c1c" stroke-width="1" fill="none"/>
<rect x="498.5" y="515.5" width="8" height="15" stroke="#1c1c1c" stroke-width="1" fill="none"/>
<rect x="511.5" y="515.5" width="8" height="15" stroke="#1c1c1c" stroke-width="1" fill="none"/>
<path d="M 489.5 520.5 H 521.5 V 525.5 H 489.5" stroke="#1c1c1c" stroke-width="1" fill="none"/>
<path d="M511 517 H517 Q523 517 523 523 Q523 529.5 517 529.5 H511" stroke="#1c1c1c" stroke-width="1" fill="none"/>
<text x="525" y="528" fill="#1c1c1c" style="font-family:&quot;Liberation Sans&quot;,sans-serif;font-size:11.0px;font-style:italic">W</text>
<rect x="522.5" y="516.7" width="3" height="30.5" fill="#fff" stroke="#1c1c1c" stroke-width="1"/>
<rect x="522.5" y="552.6" width="3" height="30.4" fill="#fff" stroke="#1c1c1c" stroke-width="1"/>
<path d="M 524.5 543.5 H 533.5 M 524.5 556.5 H 533.5" stroke="#1c1c1c" stroke-width="1" fill="none"/>
<rect x="533.5" y="539.5" width="62" height="21" stroke="#1c1c1c" stroke-width="1" fill="none"/>
<path d="M 554.5 539.5 V 560.5 M 575.5 539.5 V 560.5" stroke="#1c1c1c" stroke-width="1" fill="none"/>
<path d="M533 537 H596 M533 562.8 H596" stroke="#1c1c1c" stroke-width="1.6" fill="none"/>
<path d="M545 543 L539 558" stroke="#1c1c1c" stroke-width="1" fill="none"/>
<path d="M539 558 L539 553.69 L541.97 554.88Z" stroke="#1c1c1c" stroke-width="0.3" fill="#1c1c1c"/>
<path d="M583 558 L578 542" stroke="#1c1c1c" stroke-width="1" fill="none"/>
<path d="M578 542 L580.72 545.34 L577.67 546.3Z" stroke="#1c1c1c" stroke-width="0.3" fill="#1c1c1c"/>
<path d="M 538.5 545.5 H 542.5 M 540.5 539.5 V 545.5 M 563.5 545.5 H 567.5 M 565.5 539.5 V 545.5 M 570.5 545.5 H 574.5 M 572.5 539.5 V 545.5 M 567.5 555.5 H 571.5 M 569.5 555.5 V 560.5 M 588.5 545.5 H 592.5 M 590.5 539.5 V 545.5" stroke="#1c1c1c" stroke-width="1" fill="none"/>
<text x="596" y="555" fill="#1c1c1c" style="font-family:&quot;Liberation Sans&quot;,sans-serif;font-size:11.0px;font-style:italic">W</text>
<path d="M 543.5 516.5 V 528.5 H 554.5 V 516.5" stroke="#1c1c1c" stroke-width="1" fill="none"/>
<path d="M 549.5 516.5 V 514.5 H 559.5 V 537.5" stroke="#1c1c1c" stroke-width="1" fill="none"/>
<path d="M 569.5 411.5 V 537.5" stroke="#1c1c1c" stroke-width="1" fill="none"/>
<path d="M 564.5 562.5 V 596.5" stroke="#1c1c1c" stroke-width="1" fill="none"/>
<path d="M 588.5 564.5 H 596.5 L 592.5 570.5 Z" stroke="#1c1c1c" stroke-width="0.5" fill="#1c1c1c"/>
<path d="M 592.5 570.5 V 609.5" stroke="#1c1c1c" stroke-width="1" fill="none"/>
<rect x="494.5" y="570.5" width="21" height="13" stroke="#1c1c1c" stroke-width="1" fill="none"/>
<path d="M510.5 572 H516 Q523 572 523 577 Q523 582 516 582 H510.5" stroke="#1c1c1c" stroke-width="1" fill="none"/>
<text x="525" y="582" fill="#1c1c1c" style="font-family:&quot;Liberation Sans&quot;,sans-serif;font-size:11.0px;font-style:italic">W</text>
<rect x="552.5" y="597.5" width="19" height="25" stroke="#1c1c1c" stroke-width="1" fill="none"/>
<path d="M 561.5 599.5 H 582.5 V 602.5 H 623.5 V 616.5 H 582.5 V 620.5 H 561.5 Z" stroke="#1c1c1c" stroke-width="1" fill="none"/>
<path d="M 612.5 599.5 H 630.5 V 620.5 H 612.5 M 625.5 599.5 V 616.5" stroke="#1c1c1c" stroke-width="1" fill="none"/>
<circle cx="592" cy="609.3" r="1.8" fill="#1c1c1c"/>
<path d="M592 609.3 L701.2 686.4" stroke="#1c1c1c" stroke-width="1.2" fill="none"/>
<path d="M 625.5 504.5 V 599.5" stroke="#1c1c1c" stroke-width="1" fill="none"/>
<path d="M 564.5 596.5 V 590.5" stroke="#1c1c1c" stroke-width="1" fill="none"/>
<path d="M 515.5 515.5 V 504.5 H 634.5" stroke="#1c1c1c" stroke-width="1" fill="none"/>
<path d="M 646.5 504.5 H 680.5" stroke="#1c1c1c" stroke-width="1" fill="none"/>
<circle cx="569.5" cy="504.4" r="1.8" fill="#1c1c1c"/>
<circle cx="625.5" cy="504.4" r="1.8" fill="#1c1c1c"/>
<circle cx="640.6" cy="504.4" r="5.8" stroke="#1c1c1c" stroke-width="1" fill="none"/>
<path d="M636 497.5 L634 504.4 L636 511.3" stroke="#1c1c1c" stroke-width="1" fill="none"/>
<path d="M 569.5 411.5 V 444.5 M 569.5 457.5 V 504.5" stroke="#1c1c1c" stroke-width="1" fill="none"/>
<circle cx="569.8" cy="451" r="6" stroke="#1c1c1c" stroke-width="1" fill="none"/>
<path d="M563 453 L569.8 444 L576.5 453" stroke="#1c1c1c" stroke-width="1" fill="none"/>
<g transform="matrix(-1,0,0,1,1492,0)"><path d="M746 398.2 L368.8 398.2 M368.8 398.2 L368.8 637.6 M368.8 637.6 L621.5 637.6 M621.5 637.6 L621.5 748.3 M621.5 748.3 L731.7 748.3" stroke="#1c1c1c" stroke-width="2" fill="none" stroke-dasharray="28 5.5 6.5 5.5 6.5 5.5"/><path d="M439 398.2 L439 462.7 M439 462.7 L368.8 462.7" stroke="#1c1c1c" stroke-width="2" fill="none" stroke-dasharray="28 5.5 6.5 5.5 6.5 5.5"/><path d="M615.1 398.2 L615.1 449.8 M615.1 449.8 L663.7 449.8 M663.7 449.8 L663.7 581.2 M663.7 581.2 L542.4 581.2 M542.4 581.2 L542.4 637.6" stroke="#1c1c1c" stroke-width="2" fill="none" stroke-dasharray="28 5.5 6.5 5.5 6.5 5.5"/><path d="M 377.5 416.5 V 421.5 H 388.5 V 416.5" stroke="#1c1c1c" stroke-width="1" fill="none"/><path d="M 382.5 416.5 V 411.5 H 401.5 V 424.5" stroke="#1c1c1c" stroke-width="1" fill="none"/><path d="M 411.5 430.5 V 411.5 H 476.5" stroke="#1c1c1c" stroke-width="1" fill="none"/><path d="M 408.5 430.5 H 415.5" stroke="#1c1c1c" stroke-width="1" fill="none"/><rect x="396.5" y="424.5" width="21" height="21" stroke="#1c1c1c" stroke-width="1" fill="none"/><rect x="380.5" y="430.5" width="16" height="8" stroke="#1c1c1c" stroke-width="1" fill="none"/><path d="M383 432 L394 437 M394 432 L383 437" stroke="#1c1c1c" stroke-width="1" fill="none"/><path d="M383 448 L393 428" stroke="#1c1c1c" stroke-width="1" fill="none"/><path d="M393 428 L392.64 432.29 L389.78 430.86Z" stroke="#1c1c1c" stroke-width="0.3" fill="#1c1c1c"/><path d="M401 426 L406.5 443" stroke="#1c1c1c" stroke-width="1" fill="none"/><path d="M406.5 443 L403.75 439.69 L406.79 438.7Z" stroke="#1c1c1c" stroke-width="0.3" fill="#1c1c1c"/><path d="M406.5 445 L415 453.5" stroke="#1c1c1c" stroke-width="1" fill="none"/><path d="M 417.5 446.5 H 421.5 V 452.5 M 416.5 455.5 H 422.5" stroke="#1c1c1c" stroke-width="1" fill="none"/><text x="417" y="438.5" fill="#1c1c1c" style="font-family:&quot;Liberation Sans&quot;,sans-serif;font-size:11.0px;font-style:italic">W</text><path d="M 406.5 445.5 V 577.5 H 494.5" stroke="#1c1c1c" stroke-width="1" fill="none"/><circle cx="406.5" cy="501.9" r="1.8" fill="#1c1c1c"/><path d="M 450.5 467.5 V 475.5 H 462.5 V 467.5" stroke="#1c1c1c" stroke-width="1" fill="none"/><path d="M 456.5 467.5 V 464.5 H 466.5 V 485.5" stroke="#1c1c1c" stroke-width="1" fill="none"/><rect x="440.5" y="485.5" width="41" height="21" stroke="#1c1c1c" stroke-width="1" fill="none"/><path d="M 461.5 485.5 V 506.5" stroke="#1c1c1c" stroke-width="1" fill="none"/><path d="M445 506 L450 486" stroke="#1c1c1c" stroke-width="1" fill="none"/><path d="M450 486 L450.58 490.27 L447.48 489.49Z" stroke="#1c1c1c" stroke-width="0.3" fill="#1c1c1c"/><path d="M476 485 L471 505" stroke="#1c1c1c" stroke-width="1" fill="none"/><path d="M471 505 L470.42 500.73 L473.52 501.51Z" stroke="#1c1c1c" stroke-width="0.3" fill="#1c1c1c"/><path d="M 455.5 485.5 V 490.5 M 453.5 490.5 H 458.5 M 466.5 485.5 V 490.5 M 464.5 490.5 H 469.5" stroke="#1c1c1c" stroke-width="1" fill="none"/><text x="482" y="496" fill="#1c1c1c" style="font-family:&quot;Liberation Sans&quot;,sans-serif;font-size:11.0px;font-style:italic">W</text><path d="M406.5 501.5 L427.5 501.5" stroke="#1c1c1c" stroke-width="1" fill="none" stroke-dasharray="5 4"/><path d="M 427.5 497.5 L 434.5 501.5 L 427.5 506.5 Z" stroke="#1c1c1c" stroke-width="0.5" fill="#1c1c1c"/><path d="M 434.5 497.5 H 440.5 M 434.5 506.5 H 440.5" stroke="#1c1c1c" stroke-width="1" fill="none"/><path d="M 476.5 411.5 V 485.5" stroke="#e6a66a" stroke-width="1" fill="none"/><path d="M 471.5 506.5 V 522.5 H 485.5" stroke="#e6a66a" stroke-width="1" fill="none"/><circle cx="476.3" cy="411.3" r="1.8" fill="#e8903a"/><path d="M 476.5 411.5 H 569.5" stroke="#e6a66a" stroke-width="1" fill="none"/><circle cx="569.5" cy="411.3" r="1.8" fill="#e8903a"/><path d="M 569.5 309.5 V 411.5" stroke="#e6a66a" stroke-width="1" fill="none"/><rect x="485.5" y="515.5" width="8" height="15" stroke="#1c1c1c" stroke-width="1" fill="none"/><rect x="498.5" y="515.5" width="8" height="15" stroke="#1c1c1c" stroke-width="1" fill="none"/><rect x="511.5" y="515.5" width="8" height="15" stroke="#1c1c1c" stroke-width="1" fill="none"/><path d="M 489.5 520.5 H 521.5 V 525.5 H 489.5" stroke="#1c1c1c" stroke-width="1" fill="none"/><path d="M511 517 H517 Q523 517 523 523 Q523 529.5 517 529.5 H511" stroke="#1c1c1c" stroke-width="1" fill="none"/><text x="525" y="528" fill="#1c1c1c" style="font-family:&quot;Liberation Sans&quot;,sans-serif;font-size:11.0px;font-style:italic">W</text><rect x="522.5" y="516.7" width="3" height="30.5" fill="#fff" stroke="#1c1c1c" stroke-width="1"/><rect x="522.5" y="552.6" width="3" height="30.4" fill="#fff" stroke="#1c1c1c" stroke-width="1"/><path d="M 524.5 543.5 H 533.5 M 524.5 556.5 H 533.5" stroke="#1c1c1c" stroke-width="1" fill="none"/><rect x="533.5" y="539.5" width="62" height="21" stroke="#1c1c1c" stroke-width="1" fill="none"/><path d="M 554.5 539.5 V 560.5 M 575.5 539.5 V 560.5" stroke="#1c1c1c" stroke-width="1" fill="none"/><path d="M533 537 H596 M533 562.8 H596" stroke="#1c1c1c" stroke-width="1.6" fill="none"/><path d="M545 543 L539 558" stroke="#1c1c1c" stroke-width="1" fill="none"/><path d="M539 558 L539 553.69 L541.97 554.88Z" stroke="#1c1c1c" stroke-width="0.3" fill="#1c1c1c"/><path d="M583 558 L578 542" stroke="#1c1c1c" stroke-width="1" fill="none"/><path d="M578 542 L580.72 545.34 L577.67 546.3Z" stroke="#1c1c1c" stroke-width="0.3" fill="#1c1c1c"/><path d="M 538.5 545.5 H 542.5 M 540.5 539.5 V 545.5 M 563.5 545.5 H 567.5 M 565.5 539.5 V 545.5 M 570.5 545.5 H 574.5 M 572.5 539.5 V 545.5 M 567.5 555.5 H 571.5 M 569.5 555.5 V 560.5 M 588.5 545.5 H 592.5 M 590.5 539.5 V 545.5" stroke="#1c1c1c" stroke-width="1" fill="none"/><text x="596" y="555" fill="#1c1c1c" style="font-family:&quot;Liberation Sans&quot;,sans-serif;font-size:11.0px;font-style:italic">W</text><path d="M 543.5 516.5 V 528.5 H 554.5 V 516.5" stroke="#1c1c1c" stroke-width="1" fill="none"/><path d="M 549.5 516.5 V 514.5 H 559.5 V 537.5" stroke="#1c1c1c" stroke-width="1" fill="none"/><path d="M 569.5 411.5 V 537.5" stroke="#1c1c1c" stroke-width="1" fill="none"/><path d="M 564.5 562.5 V 596.5" stroke="#1c1c1c" stroke-width="1" fill="none"/><path d="M 588.5 564.5 H 596.5 L 592.5 570.5 Z" stroke="#1c1c1c" stroke-width="0.5" fill="#1c1c1c"/><path d="M 592.5 570.5 V 609.5" stroke="#1c1c1c" stroke-width="1" fill="none"/><rect x="494.5" y="570.5" width="21" height="13" stroke="#1c1c1c" stroke-width="1" fill="none"/><path d="M510.5 572 H516 Q523 572 523 577 Q523 582 516 582 H510.5" stroke="#1c1c1c" stroke-width="1" fill="none"/><text x="525" y="582" fill="#1c1c1c" style="font-family:&quot;Liberation Sans&quot;,sans-serif;font-size:11.0px;font-style:italic">W</text><rect x="552.5" y="597.5" width="19" height="25" stroke="#1c1c1c" stroke-width="1" fill="none"/><path d="M 561.5 599.5 H 582.5 V 602.5 H 623.5 V 616.5 H 582.5 V 620.5 H 561.5 Z" stroke="#1c1c1c" stroke-width="1" fill="none"/><path d="M 612.5 599.5 H 630.5 V 620.5 H 612.5 M 625.5 599.5 V 616.5" stroke="#1c1c1c" stroke-width="1" fill="none"/><circle cx="592" cy="609.3" r="1.8" fill="#1c1c1c"/><path d="M592 609.3 L701.2 686.4" stroke="#1c1c1c" stroke-width="1.2" fill="none"/><path d="M 625.5 504.5 V 599.5" stroke="#1c1c1c" stroke-width="1" fill="none"/><path d="M 564.5 596.5 V 590.5" stroke="#1c1c1c" stroke-width="1" fill="none"/><path d="M 515.5 515.5 V 504.5 H 634.5" stroke="#1c1c1c" stroke-width="1" fill="none"/><path d="M 646.5 504.5 H 680.5" stroke="#1c1c1c" stroke-width="1" fill="none"/><circle cx="569.5" cy="504.4" r="1.8" fill="#1c1c1c"/><circle cx="625.5" cy="504.4" r="1.8" fill="#1c1c1c"/><circle cx="640.6" cy="504.4" r="5.8" stroke="#1c1c1c" stroke-width="1" fill="none"/><path d="M636 497.5 L634 504.4 L636 511.3" stroke="#1c1c1c" stroke-width="1" fill="none"/><path d="M 569.5 411.5 V 444.5 M 569.5 457.5 V 504.5" stroke="#1c1c1c" stroke-width="1" fill="none"/><circle cx="569.8" cy="451" r="6" stroke="#1c1c1c" stroke-width="1" fill="none"/><path d="M563 453 L569.8 444 L576.5 453" stroke="#1c1c1c" stroke-width="1" fill="none"/></g>
<rect x="629.5" y="360.5" width="18" height="18" stroke="#1c1c1c" stroke-width="1" fill="none"/>
<path d="M629.5 378.8 L647.5 360.5" stroke="#1c1c1c" stroke-width="1" fill="none"/>
<path d="M636.8 378.8 L641.2 371 L645.6 378.8Z" stroke="#1c1c1c" stroke-width="0.5" fill="#1c1c1c"/>
<path d="M633 370 L635.5 364 L637.5 368 L640 362.5" stroke="#1c1c1c" stroke-width="1" fill="none"/>
<rect x="839.5" y="360.5" width="18" height="18" stroke="#1c1c1c" stroke-width="1" fill="none"/>
<path d="M839.6 378.8 L857.6 360.5" stroke="#1c1c1c" stroke-width="1" fill="none"/>
<path d="M846.9 378.8 L851.3000000000001 371 L855.7 378.8Z" stroke="#1c1c1c" stroke-width="0.5" fill="#1c1c1c"/>
<path d="M843.1 370 L845.6 364 L847.6 368 L850.1 362.5" stroke="#1c1c1c" stroke-width="1" fill="none"/>
<path d="M 641.5 372.5 V 424.5 H 680.5" stroke="#1c1c1c" stroke-width="1" fill="none"/>
<path d="M 851.5 372.5 V 424.5 H 812.5" stroke="#1c1c1c" stroke-width="1" fill="none"/>
<path d="M 502.5 491.5 L 565.5 491.5 M 573.5 491.5 L 676.5 491.5 M 684.5 491.5 L 812.5 491.5" stroke="#6c7096" stroke-width="1.2" fill="none"/>
<path d="M 565.5 491.5 A 4 4 0 0 1 573.5 491.5 M 676.5 491.5 A 4 4 0 0 1 684.5 491.5" stroke="#6c7096" stroke-width="1.2" fill="none"/>
<path d="M 502.5 491.5 V 515.5" stroke="#6c7096" stroke-width="1.2" fill="none"/>
<path d="M 680.5 478.5 L 808.5 478.5 M 816.5 478.5 L 918.5 478.5 M 926.5 478.5 L 989.5 478.5" stroke="#dc5050" stroke-width="1.2" fill="none"/>
<path d="M 808.5 478.5 A 4 4 0 0 1 816.5 478.5 M 918.5 478.5 A 4 4 0 0 1 926.5 478.5" stroke="#dc5050" stroke-width="1.2" fill="none"/>
<path d="M 989.5 478.5 V 515.5" stroke="#dc5050" stroke-width="1.2" fill="none"/>
<circle cx="680" cy="424.5" r="2" fill="#d44a4a"/>
<circle cx="680" cy="478.6" r="2" fill="#d44a4a"/>
<circle cx="680" cy="504.4" r="2" fill="#d44a4a"/>
<circle cx="812.2" cy="424.5" r="2" fill="#3a44a0"/>
<circle cx="812.2" cy="491.5" r="2" fill="#3a44a0"/>
<circle cx="812.2" cy="504.4" r="2" fill="#3a44a0"/>
<rect x="396" y="343.2" width="36" height="23.6" rx="11.8" ry="11.8" stroke="#000" stroke-width="2.7" fill="#fff"/>
<text x="414" y="360.9" fill="#16905e" text-anchor="middle" textLength="16.15" lengthAdjust="spacingAndGlyphs" style="font-family:&quot;Liberation Sans&quot;,sans-serif;font-size:16.5px;font-weight:bold">10</text>
<path d="M417.4 367 L428.4 397.3" stroke="#000" stroke-width="1.5" fill="none"/>
<path d="M 428.5 397.5 L 424.5 392.5 L 428.5 390.5 Z" stroke="#000" stroke-width="0.5" fill="#000"/>
<rect x="331.1" y="462" width="33" height="22.6" rx="11.3" ry="11.3" stroke="#000" stroke-width="2.7" fill="#fff"/>
<text x="347.6" y="479.2" fill="#16905e" text-anchor="middle" textLength="25.03" lengthAdjust="spacingAndGlyphs" style="font-family:&quot;Liberation Sans&quot;,sans-serif;font-size:16.5px;font-weight:bold">Y11</text>
<path d="M363.3 466.5 L394.4 445.8" stroke="#000" stroke-width="1.5" fill="none"/>
<path d="M 394.5 445.5 L 390.5 451.5 L 388.5 447.5 Z" stroke="#000" stroke-width="0.5" fill="#000"/>
<rect x="589.9" y="319.6" width="34.2" height="22" rx="11" ry="11" stroke="#000" stroke-width="2.7" fill="#fff"/>
<text x="607" y="336.5" fill="#16905e" text-anchor="middle" textLength="26.64" lengthAdjust="spacingAndGlyphs" style="font-family:&quot;Liberation Sans&quot;,sans-serif;font-size:16.5px;font-weight:bold">B42</text>
<path d="M617.6 342.4 L629.5 360.5" stroke="#000" stroke-width="1.5" fill="none"/>
<path d="M 629.5 360.5 L 624.5 356.5 L 628.5 354.5 Z" stroke="#000" stroke-width="0.5" fill="#000"/>
<rect x="855.3" y="318.4" width="35.8" height="23.6" rx="11.8" ry="11.8" stroke="#000" stroke-width="2.7" fill="#fff"/>
<text x="873.2" y="336.1" fill="#16905e" text-anchor="middle" textLength="26.64" lengthAdjust="spacingAndGlyphs" style="font-family:&quot;Liberation Sans&quot;,sans-serif;font-size:16.5px;font-weight:bold">B44</text>
<path d="M867 342 L857 360.5" stroke="#000" stroke-width="1.5" fill="none"/>
<path d="M 857.5 360.5 L 857.5 354.5 L 862.5 356.5 Z" stroke="#000" stroke-width="0.5" fill="#000"/>
<rect x="1029.55" y="343.1" width="35.5" height="23" rx="11.5" ry="11.5" stroke="#000" stroke-width="2.7" fill="#fff"/>
<text x="1047.3" y="360.5" fill="#16905e" text-anchor="middle" textLength="27" lengthAdjust="spacingAndGlyphs" style="font-family:&quot;Liberation Sans&quot;,sans-serif;font-size:16.5px;font-weight:bold">Y102</text>
<path d="M1052.7 366.8 L1075.9 423.4" stroke="#000" stroke-width="1.5" fill="none"/>
<path d="M 1075.5 423.5 L 1071.5 418.5 L 1075.5 416.5 Z" stroke="#000" stroke-width="0.5" fill="#000"/>
<text x="445.8" y="393.5" fill="#c4424a" text-anchor="start" style="font-family:&quot;Liberation Sans&quot;,sans-serif;font-size:13px;font-weight:bold">(FRONT)</text>
<text x="531.5" y="396" fill="#c4424a" text-anchor="start" style="font-family:&quot;Liberation Sans&quot;,sans-serif;font-size:12.5px;font-weight:bold">Psv1</text>
<text x="645" y="396" fill="#c4424a" text-anchor="start" style="font-family:&quot;Liberation Sans&quot;,sans-serif;font-size:12.5px;font-weight:bold">a1</text>
<text x="684" y="396" fill="#c4424a" text-anchor="start" style="font-family:&quot;Liberation Sans&quot;,sans-serif;font-size:12.5px;font-weight:bold">A1</text>
<text x="796" y="396" fill="#c4424a" text-anchor="start" style="font-family:&quot;Liberation Sans&quot;,sans-serif;font-size:12.5px;font-weight:bold">A2</text>
<text x="854.5" y="396" fill="#c4424a" text-anchor="start" style="font-family:&quot;Liberation Sans&quot;,sans-serif;font-size:12.5px;font-weight:bold">a2</text>
<text x="925" y="396" fill="#c4424a" text-anchor="start" style="font-family:&quot;Liberation Sans&quot;,sans-serif;font-size:12.5px;font-weight:bold">Psv2</text>
<text x="995.5" y="393.5" fill="#c4424a" text-anchor="start" style="font-family:&quot;Liberation Sans&quot;,sans-serif;font-size:13px;font-weight:bold">(REAR)</text>
<text x="508.7" y="649" fill="#c4424a" text-anchor="start" style="font-family:&quot;Liberation Sans&quot;,sans-serif;font-size:12px;font-weight:bold">a4</text>
<text x="1090" y="649" fill="#c4424a" text-anchor="start" style="font-family:&quot;Liberation Sans&quot;,sans-serif;font-size:12px;font-weight:bold">a5</text>
<path d="M 502.5 583.5 V 637.5" stroke="#1c1c1c" stroke-width="1" fill="none"/>
<path d="M499.4 634.6 L505.4 640.6 M505.4 634.6 L499.4 640.6" stroke="#1c1c1c" stroke-width="1.2" fill="none"/>
<path d="M 989.5 583.5 V 610.5 H 1085.5 V 637.5" stroke="#1c1c1c" stroke-width="1" fill="none"/>
<path d="M1082.1 634.6 L1088.1 640.6 M1088.1 634.6 L1082.1 640.6" stroke="#1c1c1c" stroke-width="1.2" fill="none"/>
<circle cx="680.1" cy="671.8" r="12.9" stroke="#1c1c1c" stroke-width="1.2" fill="#fff"/>
<path d="M674.1 667 L680.1 659.5 L686.1 667Z" stroke="#1c1c1c" stroke-width="0.5" fill="#1c1c1c"/>
<circle cx="812.3" cy="671.8" r="12.9" stroke="#1c1c1c" stroke-width="1.2" fill="#fff"/>
<path d="M806.3 667 L812.3 659.5 L818.3 667Z" stroke="#1c1c1c" stroke-width="0.5" fill="#1c1c1c"/>
<path d="M592 609.3 L701.2 686.4" stroke="#1c1c1c" stroke-width="1.2" fill="none"/>
<path d="M900 609.3 L790.8 686.4" stroke="#1c1c1c" stroke-width="1.2" fill="none"/>
<path d="M589.8 670.8 H667.2 M589.8 673.6 H667.2" stroke="#1c1c1c" stroke-width="1" fill="none"/>
<path d="M693 670.8 H799.4 M693 673.6 H799.4" stroke="#1c1c1c" stroke-width="1" fill="none"/>
<path d="M825.2 670.8 H921.3 M825.2 673.6 H921.3" stroke="#1c1c1c" stroke-width="1" fill="none"/>
<rect x="550.5" y="652.5" width="39.3" height="39" stroke="#1c1c1c" stroke-width="1.3" fill="none"/>
<text x="570.2" y="684" fill="#c4424a" text-anchor="middle" style="font-family:&quot;Liberation Sans&quot;,sans-serif;font-size:34px;font-weight:bold">M</text>
<text x="423.5" y="671" fill="#c4424a" text-anchor="start" style="font-family:&quot;Liberation Sans&quot;,sans-serif;font-size:13.2px;font-weight:bold">ISUZU&#160;&#160;6HK1X</text>
<text x="423.5" y="683.5" fill="#c4424a" text-anchor="start" style="font-family:&quot;Liberation Sans&quot;,sans-serif;font-size:13.2px;font-weight:bold">200.0 kW/1900 min<tspan dy="-4" font-size="8">-1</tspan></text>
<path d="M739.2 641.7 H752.8 M746 641.7 V818.2 M739.2 818.2 H752.8" stroke="#1c1c1c" stroke-width="1.2" fill="none"/>
<path d="M 680.5 695.5 L 742.5 695.5 M 750.5 695.5 L 812.5 695.5 M 680.5 684.5 V 695.5 M 812.5 684.5 V 695.5" stroke="#1c1c1c" stroke-width="1" fill="none"/>
<path d="M 742.5 695.5 A 4 4 0 0 1 750.5 695.5" stroke="#1c1c1c" stroke-width="1" fill="none"/>
<circle cx="688.7" cy="695" r="1.8" fill="#1c1c1c"/>
<path d="M 688.5 695.5 L 688.5 735.5" stroke="#1c1c1c" stroke-width="1" fill="none"/>
<path d="M 688.5 695.5 V 735.5 H 599.5 V 867.5" stroke="#1c1c1c" stroke-width="1" fill="none"/>
<circle cx="599.9" cy="867" r="1.8" fill="#1c1c1c"/>
<path d="M673 684.5 L667 694.5 V706 M819.5 684.5 L825.5 694.5 V706" stroke="#1c1c1c" stroke-width="1" fill="none"/>
<path d="M667 706 L667 716 M825.5 706 L825.5 716" stroke="#1c1c1c" stroke-width="1" fill="none" stroke-dasharray="4 4"/>
<path d="M586.5 716.5 L684.5 716.5 M692.5 716.5 L742.5 716.5 M750.5 716.5 L825.5 716.5 M586.5 716.5 L586.5 853.5" stroke="#1c1c1c" stroke-width="1" fill="none" stroke-dasharray="12 5"/>
<path d="M 684.5 716.5 A 4 4 0 0 1 692.5 716.5 M 742.5 716.5 A 4 4 0 0 1 750.5 716.5" stroke="#1c1c1c" stroke-width="1" fill="none"/>
<circle cx="666.8" cy="716" r="1.8" fill="#1c1c1c"/>
<path d="M210.5 853.5 L586.5 853.5" stroke="#1c1c1c" stroke-width="1" fill="none" stroke-dasharray="12 5"/>
<text x="605" y="710.5" fill="#c4424a" text-anchor="start" style="font-family:&quot;Liberation Sans&quot;,sans-serif;font-size:12.5px;font-weight:bold">Dr</text>
<text x="605" y="730" fill="#c4424a" text-anchor="start" style="font-family:&quot;Liberation Sans&quot;,sans-serif;font-size:12.5px;font-weight:bold">B1</text>
<path d="M732.3 703.5 L732.3 826.2 M759 703.5 L759 826.2" stroke="#1c1c1c" stroke-width="2" fill="none" stroke-dasharray="28 5.5 6.5 5.5 6.5 5.5"/>
<path d="M732.3 703.5 H759 M732.3 826.2 H759" stroke="#1c1c1c" stroke-width="2" fill="none"/>
<path d="M739 700.5 H753 M739 704 H753" stroke="#1c1c1c" stroke-width="1.5" fill="none"/>
<path d="M739 770.1 H752.8 M739 774 H752.8" stroke="#1c1c1c" stroke-width="1.2" fill="none"/>
<path d="M746 794.8 H790.5 M746 797.4 H790.5" stroke="#1c1c1c" stroke-width="1" fill="none"/>
<path d="M870.4 748.2 L1032.4 748.2 M1032.4 748.2 L1032.4 637.9" stroke="#1c1c1c" stroke-width="2" fill="none" stroke-dasharray="28 5.5 6.5 5.5 6.5 5.5"/>
<path d="M870.4 637.9 L870.4 748.2" stroke="#1c1c1c" stroke-width="2" fill="none" stroke-dasharray="28 5.5 6.5 5.5 6.5 5.5"/>
<path d="M759 826.2 L821.3 826.2 M821.3 826.2 L821.3 748.2" stroke="#1c1c1c" stroke-width="2" fill="none" stroke-dasharray="28 5.5 6.5 5.5 6.5 5.5"/>
<path d="M 821.5 748.5 V 776.5" stroke="#1c1c1c" stroke-width="1.2" fill="none"/>
<circle cx="798" cy="796.3" r="7.7" stroke="#1c1c1c" stroke-width="1.2" fill="#fff"/>
<path d="M795.5 791.5 L798 788.6 L800.5 791.5Z" stroke="#1c1c1c" stroke-width="0.5" fill="#1c1c1c"/>
<path d="M 798.5 788.5 V 776.5 H 872.5 M 798.5 804.5 V 867.5" stroke="#1c1c1c" stroke-width="1" fill="none"/>
<circle cx="798" cy="867.4" r="1.8" fill="#1c1c1c"/>
<circle cx="886.9" cy="776.9" r="14.2" stroke="#000" stroke-width="2.8" fill="#fff"/>
<path d="M872.7 776.9 H901.1" stroke="#000" stroke-width="1.5" fill="none"/>
<text x="886.9" y="774.4" fill="#c4424a" text-anchor="middle" style="font-family:&quot;Liberation Sans&quot;,sans-serif;font-size:9px;font-weight:normal">156</text>
<text x="886.9" y="786.4" fill="#c4424a" text-anchor="middle" style="font-family:&quot;Liberation Sans&quot;,sans-serif;font-size:9px;font-weight:normal">P1</text>
<text x="823.7" y="775" fill="#c4424a" text-anchor="start" style="font-family:&quot;Liberation Sans&quot;,sans-serif;font-size:12.5px;font-weight:bold">OUT</text>
<text x="763.6" y="811.5" fill="#c4424a" text-anchor="start" style="font-family:&quot;Liberation Sans&quot;,sans-serif;font-size:11.5px;font-weight:bold">4TH</text>
<text x="763.6" y="823" fill="#c4424a" text-anchor="start" style="font-family:&quot;Liberation Sans&quot;,sans-serif;font-size:11.5px;font-weight:bold">PUMP</text>
<text x="801.3" y="838" fill="#c4424a" text-anchor="start" style="font-family:&quot;Liberation Sans&quot;,sans-serif;font-size:12.5px;font-weight:bold">IN</text>
<rect x="827.2" y="834.35" width="35" height="23.3" rx="11.65" ry="11.65" stroke="#000" stroke-width="2.7" fill="#fff"/>
<text x="844.7" y="851.9" fill="#16905e" text-anchor="middle" textLength="8.07" lengthAdjust="spacingAndGlyphs" style="font-family:&quot;Liberation Sans&quot;,sans-serif;font-size:16.5px;font-weight:bold">9</text>
<path d="M838.9 833.4 L821.9 811.9" stroke="#000" stroke-width="1.5" fill="none"/>
<path d="M 821.5 811.5 L 827.5 815.5 L 823.5 818.5 Z" stroke="#000" stroke-width="0.5" fill="#000"/>
<path d="M 0.5 867.5 L 179.5 867.5 M 184.5 863.5 L 200.5 863.5 M 205.5 867.5 L 232.5 867.5 M 240.5 867.5 L 929.5 867.5 V 679.5" stroke="#1c1c1c" stroke-width="1" fill="none"/>
<path d="M 179.5 867.5 C 182.5 867.5 182.5 863.5 184.5 863.5 M 200.5 863.5 C 202.5 863.5 202.5 867.5 205.5 867.5 M 232.5 867.5 A 4 4 0 0 1 240.5 867.5" stroke="#1c1c1c" stroke-width="1" fill="none"/>
<circle cx="929" cy="671.4" r="7.7" stroke="#1c1c1c" stroke-width="1.2" fill="#fff"/>
<path d="M926.5 666.5 L929 663.7 L931.5 666.5Z" stroke="#1c1c1c" stroke-width="0.5" fill="#1c1c1c"/>
<path d="M 929.5 663.5 V 652.5 H 1068.5 V 672.5 L 1139.5 672.5 M 1147.5 672.5 L 1195.5 672.5" stroke="#e6a66a" stroke-width="1.2" fill="none"/>
<path d="M 1139.5 672.5 A 4 4 0 0 1 1147.5 672.5" stroke="#e6a66a" stroke-width="1.2" fill="none"/>
<path d="M 1068.5 652.5 V 672.5" stroke="#e6a66a" stroke-width="1.2" fill="none"/>
<circle cx="980.9" cy="652.7" r="1.8" fill="#e8903a"/>
<circle cx="1006.4" cy="652.7" r="1.8" fill="#e8903a"/>
<path d="M 980.5 652.5 V 662.5 M 980.5 675.5 V 687.5" stroke="#1c1c1c" stroke-width="1" fill="none"/>
<path d="M980.9 662.8 L987.7 669 L980.9 675.1 L974.2 669Z M974.2 669 H987.7" stroke="#1c1c1c" stroke-width="1" fill="none"/>
<rect x="970.5" y="687.5" width="21" height="21" stroke="#1c1c1c" stroke-width="1" fill="none"/>
<path d="M975.5 689 L975.5 706" stroke="#1c1c1c" stroke-width="1" fill="none"/>
<path d="M975.5 706 L973.9 702 L977.1 702Z" stroke="#1c1c1c" stroke-width="0.3" fill="#1c1c1c"/>
<path d="M 970.5 697.5 H 962.5 V 676.5 H 970.5" stroke="#1c1c1c" stroke-width="1" fill="none"/>
<path d="M972 679 L979 685" stroke="#1c1c1c" stroke-width="1" fill="none"/>
<text x="992" y="704" fill="#1c1c1c" style="font-family:&quot;Liberation Sans&quot;,sans-serif;font-size:11.0px;font-style:italic">W</text>
<path d="M980.5 708.5 L980.5 880.5" stroke="#1c1c1c" stroke-width="1" fill="none" stroke-dasharray="12 5"/>
<path d="M 1006.5 652.5 V 678.5 H 1032.5" stroke="#1c1c1c" stroke-width="1" fill="none"/>
<path d="M1029.1 675.3 L1035.1 681.3 M1035.1 675.3 L1029.1 681.3" stroke="#1c1c1c" stroke-width="1.2" fill="none"/>
<text x="1037.2" y="662.8" fill="#c4424a" text-anchor="start" style="font-family:&quot;Liberation Sans&quot;,sans-serif;font-size:12.5px;font-weight:bold">A3</text>
<text x="1038.8" y="689.2" fill="#c4424a" text-anchor="start" style="font-family:&quot;Liberation Sans&quot;,sans-serif;font-size:12.5px;font-weight:bold">a3</text>
<text x="888" y="686.5" fill="#c4424a" text-anchor="start" style="font-family:&quot;Liberation Sans&quot;,sans-serif;font-size:11.5px;font-weight:bold">PILOT</text>
<text x="888" y="698.5" fill="#c4424a" text-anchor="start" style="font-family:&quot;Liberation Sans&quot;,sans-serif;font-size:11.5px;font-weight:bold">PUMP</text>
<text x="984.5" y="720.5" fill="#c4424a" text-anchor="start" style="font-family:&quot;Liberation Sans&quot;,sans-serif;font-size:10px;font-weight:bold">3.92 MPa</text>
<text x="984.5" y="729.7" fill="#c4424a" text-anchor="start" style="font-family:&quot;Liberation Sans&quot;,sans-serif;font-size:10px;font-weight:bold">568.4 psi</text>
<text x="984.5" y="738.9" fill="#c4424a" text-anchor="start" style="font-family:&quot;Liberation Sans&quot;,sans-serif;font-size:10px;font-weight:bold">39.2 bar</text>
<text x="932.6" y="758.5" fill="#c4424a" text-anchor="start" style="font-family:&quot;Liberation Sans&quot;,sans-serif;font-size:12.5px;font-weight:bold">B3</text>
<text x="986.1" y="758.5" fill="#c4424a" text-anchor="start" style="font-family:&quot;Liberation Sans&quot;,sans-serif;font-size:12.5px;font-weight:bold">Dr3</text>
<path d="M1195.6 257.9 H1416 V517.2 H1195.6 Z" stroke="#1c1c1c" stroke-width="2" fill="none" stroke-dasharray="28 5.5 6.5 5.5 6.5 5.5"/>
<g transform="translate(0,0)"><rect x="1208.5" y="301.5" width="18" height="11" stroke="#1c1c1c" stroke-width="1" fill="none"/><path d="M1212 302.5 L1218 311.5" stroke="#1c1c1c" stroke-width="1" fill="none"/><rect x="1226.5" y="296.5" width="41" height="21" stroke="#1c1c1c" stroke-width="1" fill="none"/><path d="M 1246.5 296.5 V 317.5" stroke="#1c1c1c" stroke-width="1" fill="none"/><path d="M1236.5 296.5 L1232.7 316.8" stroke="#1c1c1c" stroke-width="1" fill="none"/><path d="M1232.7 316.8 L1231.86 312.57 L1235.01 313.16Z" stroke="#1c1c1c" stroke-width="0.3" fill="#1c1c1c"/><path d="M1260.9 317.1 L1257.3 296.8" stroke="#1c1c1c" stroke-width="1" fill="none"/><path d="M1257.3 296.8 L1259.57 300.46 L1256.42 301.02Z" stroke="#1c1c1c" stroke-width="0.3" fill="#1c1c1c"/><path d="M1237.8 315 H1241.8 M1239.8 315 V317.4 M1251.6 315 H1255.6 M1253.6 315 V317.4" stroke="#1c1c1c" stroke-width="1" fill="none"/><path d="M1268 302 L1271.5 313 L1275 302 L1278.5 313 L1281.5 302" stroke="#1c1c1c" stroke-width="1" fill="none"/></g>
<g transform="translate(0,78)"><rect x="1208.5" y="301.5" width="18" height="11" stroke="#1c1c1c" stroke-width="1" fill="none"/><path d="M1212 302.5 L1218 311.5" stroke="#1c1c1c" stroke-width="1" fill="none"/><rect x="1226.5" y="296.5" width="41" height="21" stroke="#1c1c1c" stroke-width="1" fill="none"/><path d="M 1246.5 296.5 V 317.5" stroke="#1c1c1c" stroke-width="1" fill="none"/><path d="M1239.8 317.1 L1236.5 296.8" stroke="#1c1c1c" stroke-width="1" fill="none"/><path d="M1236.5 296.8 L1238.72 300.49 L1235.56 301Z" stroke="#1c1c1c" stroke-width="0.3" fill="#1c1c1c"/><path d="M1257.6 296.5 L1253.8 316.8" stroke="#1c1c1c" stroke-width="1" fill="none"/><path d="M1253.8 316.8 L1252.96 312.57 L1256.11 313.16Z" stroke="#1c1c1c" stroke-width="0.3" fill="#1c1c1c"/><path d="M1230.7 315 H1234.7 M1232.7 315 V317.4 M1258.7 315 H1262.7 M1260.7 315 V317.4" stroke="#1c1c1c" stroke-width="1" fill="none"/><path d="M1268 302 L1271.5 313 L1275 302 L1278.5 313 L1281.5 302" stroke="#1c1c1c" stroke-width="1" fill="none"/></g>
<g transform="translate(0,155.9)"><rect x="1208.5" y="301.5" width="18" height="11" stroke="#1c1c1c" stroke-width="1" fill="none"/><path d="M1212 302.5 L1218 311.5" stroke="#1c1c1c" stroke-width="1" fill="none"/><rect x="1226.5" y="296.5" width="41" height="21" stroke="#1c1c1c" stroke-width="1" fill="none"/><path d="M 1246.5 296.5 V 317.5" stroke="#1c1c1c" stroke-width="1" fill="none"/><path d="M1239.8 317.1 L1236.5 296.8" stroke="#1c1c1c" stroke-width="1" fill="none"/><path d="M1236.5 296.8 L1238.72 300.49 L1235.56 301Z" stroke="#1c1c1c" stroke-width="0.3" fill="#1c1c1c"/><path d="M1257.6 296.5 L1253.8 316.8" stroke="#1c1c1c" stroke-width="1" fill="none"/><path d="M1253.8 316.8 L1252.96 312.57 L1256.11 313.16Z" stroke="#1c1c1c" stroke-width="0.3" fill="#1c1c1c"/><path d="M1230.7 315 H1234.7 M1232.7 315 V317.4 M1258.7 315 H1262.7 M1260.7 315 V317.4" stroke="#1c1c1c" stroke-width="1" fill="none"/><path d="M1268 302 L1271.5 313 L1275 302 L1278.5 313 L1281.5 302" stroke="#1c1c1c" stroke-width="1" fill="none"/></g>
<g transform="matrix(-1,0,0,1,2611.8,0)"><rect x="1208.5" y="301.5" width="18" height="11" stroke="#1c1c1c" stroke-width="1" fill="none"/><path d="M1212 302.5 L1218 311.5" stroke="#1c1c1c" stroke-width="1" fill="none"/><rect x="1226.5" y="296.5" width="41" height="21" stroke="#1c1c1c" stroke-width="1" fill="none"/><path d="M 1246.5 296.5 V 317.5" stroke="#1c1c1c" stroke-width="1" fill="none"/><path d="M1236.5 296.5 L1232.7 316.8" stroke="#1c1c1c" stroke-width="1" fill="none"/><path d="M1232.7 316.8 L1231.86 312.57 L1235.01 313.16Z" stroke="#1c1c1c" stroke-width="0.3" fill="#1c1c1c"/><path d="M1260.9 317.1 L1257.3 296.8" stroke="#1c1c1c" stroke-width="1" fill="none"/><path d="M1257.3 296.8 L1259.57 300.46 L1256.42 301.02Z" stroke="#1c1c1c" stroke-width="0.3" fill="#1c1c1c"/><path d="M1237.8 315 H1241.8 M1239.8 315 V317.4 M1251.6 315 H1255.6 M1253.6 315 V317.4" stroke="#1c1c1c" stroke-width="1" fill="none"/><path d="M1268 302 L1271.5 313 L1275 302 L1278.5 313 L1281.5 302" stroke="#1c1c1c" stroke-width="1" fill="none"/></g>
<g transform="matrix(-1,0,0,1,2611.8,78)"><rect x="1208.5" y="301.5" width="18" height="11" stroke="#1c1c1c" stroke-width="1" fill="none"/><path d="M1212 302.5 L1218 311.5" stroke="#1c1c1c" stroke-width="1" fill="none"/><rect x="1226.5" y="296.5" width="41" height="21" stroke="#1c1c1c" stroke-width="1" fill="none"/><path d="M 1246.5 296.5 V 317.5" stroke="#1c1c1c" stroke-width="1" fill="none"/><path d="M1239.8 317.1 L1236.5 296.8" stroke="#1c1c1c" stroke-width="1" fill="none"/><path d="M1236.5 296.8 L1238.72 300.49 L1235.56 301Z" stroke="#1c1c1c" stroke-width="0.3" fill="#1c1c1c"/><path d="M1257.6 296.5 L1253.8 316.8" stroke="#1c1c1c" stroke-width="1" fill="none"/><path d="M1253.8 316.8 L1252.96 312.57 L1256.11 313.16Z" stroke="#1c1c1c" stroke-width="0.3" fill="#1c1c1c"/><path d="M1230.7 315 H1234.7 M1232.7 315 V317.4 M1258.7 315 H1262.7 M1260.7 315 V317.4" stroke="#1c1c1c" stroke-width="1" fill="none"/><path d="M1268 302 L1271.5 313 L1275 302 L1278.5 313 L1281.5 302" stroke="#1c1c1c" stroke-width="1" fill="none"/></g>
<text x="1273.7" y="256" fill="#c4424a" text-anchor="start" style="font-family:&quot;Liberation Sans&quot;,sans-serif;font-size:12.5px;font-weight:bold">P1</text>
<text x="1320.8" y="256" fill="#c4424a" text-anchor="start" style="font-family:&quot;Liberation Sans&quot;,sans-serif;font-size:12.5px;font-weight:bold">D1</text>
<text x="1176.5" y="282" fill="#c4424a" text-anchor="start" style="font-family:&quot;Liberation Sans&quot;,sans-serif;font-size:12.5px;font-weight:normal">C2</text>
<text x="1200" y="281.5" fill="#c4424a" text-anchor="start" textLength="68" lengthAdjust="spacingAndGlyphs" style="font-family:&quot;Liberation Sans&quot;,sans-serif;font-size:11px;font-weight:normal">SWING BRAKE</text>
<text x="1366.6" y="281.5" fill="#c4424a" text-anchor="start" textLength="32.3" lengthAdjust="spacingAndGlyphs" style="font-family:&quot;Liberation Sans&quot;,sans-serif;font-size:11px;font-weight:normal">LEVER</text>
<text x="1374.7" y="293.5" fill="#c4424a" text-anchor="start" textLength="27" lengthAdjust="spacingAndGlyphs" style="font-family:&quot;Liberation Sans&quot;,sans-serif;font-size:11px;font-weight:normal">LOCK</text>
<text x="1176.5" y="359.5" fill="#c4424a" text-anchor="start" style="font-family:&quot;Liberation Sans&quot;,sans-serif;font-size:12.5px;font-weight:normal">C3</text>
<text x="1200" y="359" fill="#c4424a" text-anchor="start" textLength="66.3" lengthAdjust="spacingAndGlyphs" style="font-family:&quot;Liberation Sans&quot;,sans-serif;font-size:11px;font-weight:normal">2-STAGE RELIEF</text>
<text x="1337" y="359" fill="#c4424a" text-anchor="start" textLength="61" lengthAdjust="spacingAndGlyphs" style="font-family:&quot;Liberation Sans&quot;,sans-serif;font-size:11px;font-weight:normal">CENTER CUT</text>
<text x="1419.5" y="372" fill="#c4424a" text-anchor="start" style="font-family:&quot;Liberation Sans&quot;,sans-serif;font-size:12.5px;font-weight:bold">C12</text>
<text x="1176.5" y="437.5" fill="#c4424a" text-anchor="start" style="font-family:&quot;Liberation Sans&quot;,sans-serif;font-size:12.5px;font-weight:normal">C1</text>
<text x="1200" y="437" fill="#c4424a" text-anchor="start" textLength="69" lengthAdjust="spacingAndGlyphs" style="font-family:&quot;Liberation Sans&quot;,sans-serif;font-size:11px;font-weight:normal">2-STAGE TRAVEL</text>
<rect x="1210.05" y="322.4" width="35.5" height="22.4" rx="11.2" ry="11.2" stroke="#000" stroke-width="2.7" fill="#fff"/>
<text x="1227.8" y="339.5" fill="#16905e" text-anchor="middle" textLength="17.76" lengthAdjust="spacingAndGlyphs" style="font-family:&quot;Liberation Sans&quot;,sans-serif;font-size:16.5px;font-weight:bold">Y3</text>
<rect x="1367.65" y="322.4" width="35.5" height="22.4" rx="11.2" ry="11.2" stroke="#000" stroke-width="2.7" fill="#fff"/>
<text x="1385.4" y="339.5" fill="#16905e" text-anchor="middle" textLength="17.76" lengthAdjust="spacingAndGlyphs" style="font-family:&quot;Liberation Sans&quot;,sans-serif;font-size:16.5px;font-weight:bold">Y2</text>
<rect x="1210.05" y="399.8" width="35.5" height="22.4" rx="11.2" ry="11.2" stroke="#000" stroke-width="2.7" fill="#fff"/>
<text x="1227.8" y="416.9" fill="#16905e" text-anchor="middle" textLength="17.76" lengthAdjust="spacingAndGlyphs" style="font-family:&quot;Liberation Sans&quot;,sans-serif;font-size:16.5px;font-weight:bold">Y5</text>
<rect x="1367.65" y="399.8" width="35.5" height="22.4" rx="11.2" ry="11.2" stroke="#000" stroke-width="2.7" fill="#fff"/>
<text x="1385.4" y="416.9" fill="#16905e" text-anchor="middle" textLength="25.83" lengthAdjust="spacingAndGlyphs" style="font-family:&quot;Liberation Sans&quot;,sans-serif;font-size:16.5px;font-weight:bold">Y99</text>
<rect x="1210.05" y="477.3" width="35.5" height="22.4" rx="11.2" ry="11.2" stroke="#000" stroke-width="2.7" fill="#fff"/>
<text x="1227.8" y="494.4" fill="#16905e" text-anchor="middle" textLength="17.76" lengthAdjust="spacingAndGlyphs" style="font-family:&quot;Liberation Sans&quot;,sans-serif;font-size:16.5px;font-weight:bold">Y4</text>
<path d="M 1299.5 180.5 V 330.5" stroke="#e6a66a" stroke-width="1.2" fill="none"/>
<path d="M 1299.5 330.5 V 486.5" stroke="#1c1c1c" stroke-width="1" fill="none"/>
<path d="M 1312.5 232.5 V 498.5" stroke="#1c1c1c" stroke-width="1" fill="none"/>
<circle cx="1299.1" cy="283.5" r="1.8" fill="#e8903a"/>
<circle cx="1299.1" cy="330.5" r="1.8" fill="#e8903a"/>
<path d="M 1260.5 317.5 V 330.5 H 1299.5" stroke="#e6a66a" stroke-width="1.2" fill="none"/>
<path d="M 1299.5 283.5 L 1308.5 283.5 M 1316.5 283.5 L 1354.5 283.5 V 296.5" stroke="#e6a66a" stroke-width="1.2" fill="none"/>
<path d="M 1308.5 283.5 A 4 4 0 0 1 1316.5 283.5" stroke="#e6a66a" stroke-width="1.2" fill="none"/>
<path d="M 1351.5 317.5 V 330.5 H 1325.5 V 543.5 H 1429.5 V 672.5" stroke="#e6a66a" stroke-width="1.2" fill="none"/>
<path d="M 1253.5 317.5 V 343.5 L 1295.5 343.5 M 1303.5 343.5 L 1321.5 343.5 M 1329.5 343.5 L 1358.5 343.5 V 317.5" stroke="#1c1c1c" stroke-width="1" fill="none"/>
<path d="M 1295.5 343.5 A 4 4 0 0 1 1303.5 343.5 M 1321.5 343.5 A 4 4 0 0 1 1329.5 343.5" stroke="#1c1c1c" stroke-width="1" fill="none"/>
<circle cx="1312.3" cy="343.1" r="1.8" fill="#1c1c1c"/>
<path d="M 1260.5 395.5 V 408.5 H 1299.5" stroke="#1c1c1c" stroke-width="1" fill="none"/>
<circle cx="1299.1" cy="408" r="1.8" fill="#1c1c1c"/>
<path d="M 1253.5 395.5 V 421.5 L 1295.5 421.5 M 1303.5 421.5 L 1321.5 421.5 M 1329.5 421.5 L 1358.5 421.5 V 395.5" stroke="#1c1c1c" stroke-width="1" fill="none"/>
<path d="M 1295.5 421.5 A 4 4 0 0 1 1303.5 421.5 M 1321.5 421.5 A 4 4 0 0 1 1329.5 421.5" stroke="#1c1c1c" stroke-width="1" fill="none"/>
<circle cx="1312.3" cy="421.4" r="1.8" fill="#1c1c1c"/>
<path d="M 1351.5 395.5 V 408.5 H 1325.5" stroke="#1c1c1c" stroke-width="1" fill="none"/>
<circle cx="1325.4" cy="408" r="1.8" fill="#e8903a"/>
<path d="M 1260.5 473.5 V 486.5 H 1299.5" stroke="#1c1c1c" stroke-width="1" fill="none"/>
<path d="M 1253.5 473.5 V 498.5 H 1312.5" stroke="#1c1c1c" stroke-width="1" fill="none"/>
<path d="M 1442.5 361.5 H 1355.5 V 374.5" stroke="#1c1c1c" stroke-width="1" fill="none"/>
<path d="M 1195.5 439.5 H 1257.5 V 452.5" stroke="#1c1c1c" stroke-width="1" fill="none"/>
<text x="1329" y="528" fill="#c4424a" text-anchor="start" style="font-family:&quot;Liberation Sans&quot;,sans-serif;font-size:12.5px;font-weight:bold">P0</text>
<rect x="1176.2" y="554.65" width="35.2" height="22.7" rx="11.35" ry="11.35" stroke="#000" stroke-width="2.7" fill="#fff"/>
<text x="1193.8" y="571.9" fill="#16905e" text-anchor="middle" textLength="24.22" lengthAdjust="spacingAndGlyphs" style="font-family:&quot;Liberation Sans&quot;,sans-serif;font-size:16.5px;font-weight:bold">133</text>
<path d="M1199.4 554.6 L1217.9 518.5" stroke="#000" stroke-width="1.5" fill="none"/>
<path d="M 1217.5 518.5 L 1217.5 524.5 L 1212.5 522.5 Z" stroke="#000" stroke-width="0.5" fill="#000"/>
<rect x="1324.2" y="554.65" width="35.2" height="22.7" rx="11.35" ry="11.35" stroke="#000" stroke-width="2.7" fill="#fff"/>
<text x="1341.8" y="571.9" fill="#16905e" text-anchor="middle" textLength="16.15" lengthAdjust="spacingAndGlyphs" style="font-family:&quot;Liberation Sans&quot;,sans-serif;font-size:16.5px;font-weight:bold">51</text>
<path d="M1351 577.7 L1369.6 596.6" stroke="#000" stroke-width="1.5" fill="none"/>
<path d="M 1369.5 596.5 L 1363.5 594.5 L 1367.5 590.5 Z" stroke="#000" stroke-width="0.5" fill="#000"/>
<rect x="1368.3" y="594.7" width="18.5" height="36.6" rx="9.25" ry="9.25" stroke="#1c1c1c" stroke-width="1" fill="none"/>
<path d="M 1377.5 631.5 V 672.5" stroke="#1c1c1c" stroke-width="1" fill="none"/>
<text x="1358.5" y="603.5" fill="#c4424a" text-anchor="end" style="font-family:&quot;Liberation Sans&quot;,sans-serif;font-size:10.6px;font-weight:bold">GAS PRESSURE</text>
<text x="1358.5" y="612.6" fill="#c4424a" text-anchor="end" style="font-family:&quot;Liberation Sans&quot;,sans-serif;font-size:10.6px;font-weight:bold">1.5 MPa / 217.5 psi / 15 bar</text>
<text x="1358.5" y="621.7" fill="#c4424a" text-anchor="end" style="font-family:&quot;Liberation Sans&quot;,sans-serif;font-size:10.6px;font-weight:bold">CAPACITY</text>
<text x="1358.5" y="630.8" fill="#c4424a" text-anchor="end" style="font-family:&quot;Liberation Sans&quot;,sans-serif;font-size:10.6px;font-weight:bold">320cm³</text>
<rect x="1182.7" y="614.7" width="35.2" height="22.6" rx="11.3" ry="11.3" stroke="#000" stroke-width="2.7" fill="#fff"/>
<text x="1200.3" y="631.9" fill="#16905e" text-anchor="middle" textLength="16.15" lengthAdjust="spacingAndGlyphs" style="font-family:&quot;Liberation Sans&quot;,sans-serif;font-size:16.5px;font-weight:bold">85</text>
<path d="M1207.7 637.8 L1229.9 661.9" stroke="#000" stroke-width="1.5" fill="none"/>
<path d="M 1229.5 661.5 L 1224.5 659.5 L 1227.5 655.5 Z" stroke="#000" stroke-width="0.5" fill="#000"/>
<text x="1212.3" y="663" fill="#c4424a" text-anchor="start" style="font-family:&quot;Liberation Sans&quot;,sans-serif;font-size:9px;font-weight:bold">8μ</text>
<path d="M1195.7 646.5 H1403.4 V744.2 H1195.7 Z" stroke="#1c1c1c" stroke-width="2" fill="none" stroke-dasharray="28 5.5 6.5 5.5 6.5 5.5"/>
<text x="1380.6" y="644" fill="#c4424a" text-anchor="start" style="font-family:&quot;Liberation Sans&quot;,sans-serif;font-size:12px;font-weight:bold">P3</text>
<text x="1185.5" y="670.5" fill="#c4424a" text-anchor="start" style="font-family:&quot;Liberation Sans&quot;,sans-serif;font-size:12px;font-weight:bold">P</text>
<text x="1406.5" y="683" fill="#c4424a" text-anchor="start" style="font-family:&quot;Liberation Sans&quot;,sans-serif;font-size:12px;font-weight:bold">P0</text>
<path d="M 1195.5 672.5 L 1346.5 672.5 M 1357.5 672.5 H 1429.5" stroke="#e6a66a" stroke-width="1.2" fill="none"/>
<circle cx="1206.2" cy="672.7" r="1.8" fill="#e8903a"/>
<circle cx="1263.6" cy="672.7" r="1.8" fill="#e8903a"/>
<circle cx="1299.3" cy="672.7" r="1.8" fill="#e8903a"/>
<circle cx="1325.2" cy="672.7" r="1.8" fill="#e8903a"/>
<circle cx="1377.2" cy="672.7" r="1.8" fill="#e8903a"/>
<path d="M1235.1 660.1 L1247.7 672.7 L1235.1 685.3 L1222.5 672.7 Z" stroke="#1c1c1c" stroke-width="1" fill="none"/>
<path d="M1235.5 662.5 L1235.5 684.5" stroke="#1c1c1c" stroke-width="1" fill="none" stroke-dasharray="3 2.5"/>
<circle cx="1352" cy="672.7" r="5.5" stroke="#1c1c1c" stroke-width="1" fill="none"/>
<path d="M1347.5 667 L1345.5 672.7 L1347.5 678.5" stroke="#1c1c1c" stroke-width="1" fill="none"/>
<path d="M 1206.5 672.5 V 709.5 H 1224.5 M 1263.5 672.5 V 709.5 H 1243.5" stroke="#1c1c1c" stroke-width="1" fill="none"/>
<circle cx="1215.5" cy="709.4" r="1.8" fill="#1c1c1c"/>
<rect x="1224.5" y="699.5" width="19" height="19" stroke="#1c1c1c" stroke-width="1" fill="none"/>
<path d="M1224.3 713 H1243 L1240 711 M1243 713 L1240 715" stroke="#1c1c1c" stroke-width="1" fill="none"/>
<path d="M1231 699 L1237 696 L1231 693 L1237 690" stroke="#1c1c1c" stroke-width="1" fill="none"/>
<path d="M 1233.5 718.5 V 726.5 H 1225.5 M 1215.5 716.5 V 726.5" stroke="#1c1c1c" stroke-width="1" fill="none"/>
<rect x="1154.9" y="735.3" width="35.2" height="23" rx="11.5" ry="11.5" stroke="#000" stroke-width="2.7" fill="#fff"/>
<text x="1172.5" y="752.7" fill="#16905e" text-anchor="middle" textLength="16.15" lengthAdjust="spacingAndGlyphs" style="font-family:&quot;Liberation Sans&quot;,sans-serif;font-size:16.5px;font-weight:bold">86</text>
<path d="M1189.2 739.9 L1223.4 718.6" stroke="#000" stroke-width="1.5" fill="none"/>
<path d="M 1223.5 718.5 L 1219.5 723.5 L 1216.5 719.5 Z" stroke="#000" stroke-width="0.5" fill="#000"/>
<text x="1246.2" y="719" fill="#c4424a" text-anchor="start" style="font-family:&quot;Liberation Sans&quot;,sans-serif;font-size:10px;font-weight:bold">0.15 MPa</text>
<text x="1246.2" y="728.3" fill="#c4424a" text-anchor="start" style="font-family:&quot;Liberation Sans&quot;,sans-serif;font-size:10px;font-weight:bold">21.75 psi</text>
<text x="1246.2" y="737.6" fill="#c4424a" text-anchor="start" style="font-family:&quot;Liberation Sans&quot;,sans-serif;font-size:10px;font-weight:bold">1.5 bar</text>
<text x="1336.8" y="690.2" fill="#c4424a" text-anchor="start" style="font-family:&quot;Liberation Sans&quot;,sans-serif;font-size:10px;font-weight:bold">0.02 MPa</text>
<text x="1336.8" y="699.5" fill="#c4424a" text-anchor="start" style="font-family:&quot;Liberation Sans&quot;,sans-serif;font-size:10px;font-weight:bold">0.29 psi</text>
<text x="1336.8" y="708.8" fill="#c4424a" text-anchor="start" style="font-family:&quot;Liberation Sans&quot;,sans-serif;font-size:10px;font-weight:bold">0.2 bar</text>
<path d="M 1299.5 672.5 V 769.5 H 1143.5" stroke="#e6a66a" stroke-width="1.2" fill="none"/>
<path d="M 1325.5 672.5 V 744.5" stroke="#1c1c1c" stroke-width="1" fill="none"/>
<path d="M1322.2 741.2 L1328.2 747.2 M1328.2 741.2 L1322.2 747.2" stroke="#1c1c1c" stroke-width="1.2" fill="none"/>
<text x="1282" y="754.5" fill="#c4424a" text-anchor="start" style="font-family:&quot;Liberation Sans&quot;,sans-serif;font-size:12px;font-weight:bold">P1</text>
<text x="1331.6" y="754.5" fill="#c4424a" text-anchor="start" style="font-family:&quot;Liberation Sans&quot;,sans-serif;font-size:12px;font-weight:bold">P2</text>
<rect x="1426.75" y="716.8" width="34.5" height="23" rx="11.5" ry="11.5" stroke="#000" stroke-width="2.7" fill="#fff"/>
<text x="1444" y="734.2" fill="#16905e" text-anchor="middle" textLength="16.15" lengthAdjust="spacingAndGlyphs" style="font-family:&quot;Liberation Sans&quot;,sans-serif;font-size:16.5px;font-weight:bold">60</text>
<path d="M1427.8 722.3 L1403.8 710.3" stroke="#000" stroke-width="1.5" fill="none"/>
<path d="M 1403.5 710.5 L 1410.5 710.5 L 1408.5 715.5 Z" stroke="#000" stroke-width="0.5" fill="#000"/>
<path d="M 1143.5 309.5 V 769.5" stroke="#e6a66a" stroke-width="1.2" fill="none"/>
<text x="1647" y="841.5" fill="#000" text-anchor="middle" style="font-family:&quot;Liberation Sans&quot;,sans-serif;font-size:27px;font-weight:bold">380X4 MH</text>
<text x="1647" y="873.5" fill="#000" text-anchor="middle" style="font-family:&quot;Liberation Sans&quot;,sans-serif;font-size:27px;font-weight:bold">HYDRAULIC SCHEMATIC</text>
<text x="1647" y="905" fill="#000" text-anchor="middle" style="font-family:&quot;Liberation Sans&quot;,sans-serif;font-size:27px;font-weight:bold">33224586-2 EN 1/2</text>
<path d="M314.4 711.7 H353.7 V841.2 H314.4 Z" stroke="#1c1c1c" stroke-width="2" fill="none" stroke-dasharray="28 5.5 6.5 5.5 6.5 5.5"/>
<path d="M333.9 724.3 V828.1" stroke="#1c1c1c" stroke-width="2" fill="none"/>
<path d="M 314.5 724.5 H 333.5 M 314.5 750.5 H 333.5 M 314.5 776.5 H 333.5 M 314.5 802.5 H 333.5 M 314.5 828.5 H 333.5" stroke="#1c1c1c" stroke-width="1" fill="none"/>
<path d="M 333.5 737.5 H 353.5 M 333.5 763.5 H 353.5 M 333.5 789.5 H 353.5 M 333.5 815.5 H 353.5" stroke="#1c1c1c" stroke-width="1" fill="none"/>
<circle cx="333.9" cy="737.4" r="2" fill="#1c1c1c"/>
<circle cx="333.9" cy="750.3" r="2" fill="#1c1c1c"/>
<circle cx="333.9" cy="763.3" r="2" fill="#1c1c1c"/>
<circle cx="333.9" cy="776.3" r="2" fill="#1c1c1c"/>
<circle cx="333.9" cy="789.2" r="2" fill="#1c1c1c"/>
<circle cx="333.9" cy="802.2" r="2" fill="#1c1c1c"/>
<circle cx="333.9" cy="815.3" r="2" fill="#1c1c1c"/>
<path d="M353.5 763.5 L401.5 763.5 M409.5 763.5 L483.5 763.5" stroke="#1c1c1c" stroke-width="1" fill="none" stroke-dasharray="12 5"/>
<path d="M 401.5 763.5 A 4 4 0 0 1 409.5 763.5" stroke="#1c1c1c" stroke-width="1" fill="none"/>
<circle cx="392.7" cy="763.3" r="1.8" fill="#1c1c1c"/>
<path d="M353.5 815.5 L405.5 815.5" stroke="#1c1c1c" stroke-width="1" fill="none" stroke-dasharray="12 5"/>
<text x="308" y="736" fill="#c4424a" text-anchor="end" style="font-family:&quot;Liberation Sans&quot;,sans-serif;font-size:12.5px;font-weight:bold">D24</text>
<text x="308" y="761.5" fill="#c4424a" text-anchor="end" style="font-family:&quot;Liberation Sans&quot;,sans-serif;font-size:12.5px;font-weight:bold">T1</text>
<text x="308" y="787.5" fill="#c4424a" text-anchor="end" style="font-family:&quot;Liberation Sans&quot;,sans-serif;font-size:12.5px;font-weight:bold">T</text>
<text x="308" y="813" fill="#c4424a" text-anchor="end" style="font-family:&quot;Liberation Sans&quot;,sans-serif;font-size:12.5px;font-weight:bold">D11</text>
<text x="308" y="839" fill="#c4424a" text-anchor="end" style="font-family:&quot;Liberation Sans&quot;,sans-serif;font-size:12.5px;font-weight:bold">D3</text>
<text x="356.7" y="736" fill="#c4424a" text-anchor="start" style="font-family:&quot;Liberation Sans&quot;,sans-serif;font-size:12.5px;font-weight:bold">D8</text>
<text x="356.7" y="761.5" fill="#c4424a" text-anchor="start" style="font-family:&quot;Liberation Sans&quot;,sans-serif;font-size:12.5px;font-weight:bold">D6</text>
<text x="356.7" y="787.5" fill="#c4424a" text-anchor="start" style="font-family:&quot;Liberation Sans&quot;,sans-serif;font-size:12.5px;font-weight:bold">D1</text>
<text x="356.7" y="813" fill="#c4424a" text-anchor="start" style="font-family:&quot;Liberation Sans&quot;,sans-serif;font-size:12.5px;font-weight:bold">D5</text>
<rect x="336.25" y="644" width="35.5" height="23.2" rx="11.6" ry="11.6" stroke="#000" stroke-width="2.7" fill="#fff"/>
<text x="354" y="661.5" fill="#16905e" text-anchor="middle" textLength="16.15" lengthAdjust="spacingAndGlyphs" style="font-family:&quot;Liberation Sans&quot;,sans-serif;font-size:16.5px;font-weight:bold">43</text>
<path d="M350.7 668 L333.6 710.5" stroke="#000" stroke-width="1.5" fill="none"/>
<path d="M 333.5 710.5 L 333.5 704.5 L 338.5 705.5 Z" stroke="#000" stroke-width="0.5" fill="#000"/>
<circle cx="497.5" cy="763.3" r="14" stroke="#000" stroke-width="2.8" fill="#fff"/>
<path d="M483.5 763.3 H511.5" stroke="#000" stroke-width="1.5" fill="none"/>
<text x="497.5" y="760.8" fill="#c4424a" text-anchor="middle" style="font-family:&quot;Liberation Sans&quot;,sans-serif;font-size:9px;font-weight:normal">Y18</text>
<text x="497.5" y="772.8" fill="#c4424a" text-anchor="middle" style="font-family:&quot;Liberation Sans&quot;,sans-serif;font-size:9px;font-weight:normal">T</text>
<circle cx="419" cy="815.3" r="14" stroke="#000" stroke-width="2.8" fill="#fff"/>
<path d="M405 815.3 H433" stroke="#000" stroke-width="1.5" fill="none"/>
<text x="419" y="812.8" fill="#c4424a" text-anchor="middle" style="font-family:&quot;Liberation Sans&quot;,sans-serif;font-size:9px;font-weight:normal">15</text>
<text x="419" y="824.8" fill="#c4424a" text-anchor="middle" style="font-family:&quot;Liberation Sans&quot;,sans-serif;font-size:9px;font-weight:normal">DR1h</text>
<circle cx="446.8" cy="815.3" r="14" stroke="#000" stroke-width="2.8" fill="#fff"/>
<path d="M432.8 815.3 H460.8" stroke="#000" stroke-width="1.5" fill="none"/>
<text x="446.8" y="812.8" fill="#c4424a" text-anchor="middle" style="font-family:&quot;Liberation Sans&quot;,sans-serif;font-size:9px;font-weight:normal">30</text>
<text x="446.8" y="824.8" fill="#c4424a" text-anchor="middle" style="font-family:&quot;Liberation Sans&quot;,sans-serif;font-size:9px;font-weight:normal">DR</text>
<rect x="1895" y="0" width="8" height="974" fill="#ababab"/>
<rect x="1895" y="0" width="1.3" height="974" fill="#555"/>
<rect x="0" y="973" width="1896" height="1.3" fill="#555"/>
<rect x="0" y="974.3" width="1903" height="6.5" fill="#ababab"/>
<rect x="0" y="980.8" width="1903" height="1.2" fill="#ffffff"/>
<rect x="0" y="982" width="1903" height="43" fill="#f0f0f0"/>
<rect x="0" y="1025" width="1903" height="2" fill="#3a3a3a"/>
<rect x="0" y="982" width="8.5" height="12.5" fill="#dcdcdc"/>
<rect x="8.5" y="982" width="1" height="12.5" fill="#777"/>
<path d="M19.5 986 L15 989 L19.5 992" stroke="#333" stroke-width="1.8" fill="none"/>
<rect x="778" y="982.3" width="1108" height="12.7" fill="#cbcbcb"/>
<path d="M1893 986 L1897.5 989.5 L1893 993" stroke="#333" stroke-width="1.8" fill="none"/>
<path d="M 774.5 1010.5 L 781.5 1004.5 V 1016.5 Z" stroke="#999" stroke-width="0.5" fill="#999"/>
<rect x="782" y="1004.5" width="2" height="12" fill="#999"/>
<path d="M 801.5 1010.5 L 808.5 1004.5 V 1017.5 Z" stroke="#999" stroke-width="0.5" fill="#999"/>
<rect x="820.5" y="1000.5" width="114" height="19" fill="#fff"/>
<rect x="820.5" y="1000.5" width="114" height="19" stroke="#aaa" stroke-width="1" fill="none"/>
<text x="826" y="1015" fill="#111" text-anchor="start" style="font-family:&quot;Liberation Sans&quot;,sans-serif;font-size:12px;font-weight:normal">1 / 1</text>
<path d="M 924.5 1009.5 H 930.5 L 927.5 1012.5 Z" stroke="#222" stroke-width="0.5" fill="#222"/>
<path d="M 944.5 1004.5 L 951.5 1010.5 L 944.5 1017.5 Z" stroke="#999" stroke-width="0.5" fill="#999"/>
<rect x="967" y="1004.5" width="2" height="12" fill="#999"/>
<path d="M 971.5 1004.5 L 978.5 1010.5 L 971.5 1016.5 Z" stroke="#999" stroke-width="0.5" fill="#999"/>
<rect x="991.5" y="1004.5" width="7" height="7" stroke="#5577aa" stroke-width="1.2" fill="none"/>
<rect x="997.5" y="1009.5" width="9" height="8" stroke="#333" stroke-width="1.2" fill="none"/>
<path d="M 999.5 1005.5 H 1005.5 M 1001.5 1003.5 L 999.5 1005.5 L 1001.5 1007.5" stroke="#3c8a6a" stroke-width="1.2" fill="none"/>
<rect x="1018.5" y="1004.5" width="7" height="7" stroke="#bbb" stroke-width="1.2" fill="none"/>
<rect x="1023.5" y="1009.5" width="9" height="8" stroke="#bbb" stroke-width="1.2" fill="none"/>
<path d="M 1018.5 1014.5 H 1024.5 M 1022.5 1012.5 L 1024.5 1014.5 L 1022.5 1016.5" stroke="#9cc" stroke-width="1.2" fill="none"/>
<rect x="1578" y="1002" width="22.7" height="17.7" fill="#c7daf2"/>
<rect x="1583.5" y="1004.5" width="11" height="13" stroke="#333" stroke-width="1.3" fill="none"/>
<path d="M 1585.5 1008.5 H 1592.5 M 1585.5 1011.5 H 1592.5 M 1585.5 1014.5 H 1592.5" stroke="#333" stroke-width="1" fill="none"/>
<path d="M 1608.5 1003.5 H 1619.5 V 1012.5 H 1608.5 Z M 1610.5 1006.5 H 1617.5 M 1610.5 1009.5 H 1617.5 M 1608.5 1019.5 V 1015.5 H 1619.5 V 1019.5" stroke="#aaa" stroke-width="1.2" fill="none"/>
<path d="M 1633.5 1004.5 H 1640.5 V 1017.5 H 1633.5 Z M 1642.5 1004.5 H 1648.5 V 1017.5 H 1642.5 Z" stroke="#aaa" stroke-width="1.2" fill="none"/>
<path d="M 1659.5 1003.5 H 1666.5 M 1667.5 1003.5 H 1674.5 M 1659.5 1007.5 H 1666.5 M 1667.5 1007.5 H 1674.5 M 1659.5 1010.5 H 1674.5 M 1659.5 1014.5 H 1666.5 M 1667.5 1014.5 H 1674.5 M 1666.5 1003.5 V 1010.5 M 1666.5 1014.5 V 1019.5" stroke="#aaa" stroke-width="1" fill="none"/>
<text x="1701" y="1015.5" fill="#222" text-anchor="start" style="font-family:&quot;Liberation Sans&quot;,sans-serif;font-size:12px;font-weight:normal">100%</text>
<path d="M 1757.5 1009.5 H 1763.5 L 1760.5 1012.5 Z" stroke="#222" stroke-width="0.5" fill="#222"/>
<circle cx="1775.6" cy="1010.3" r="7.3" stroke="#333" stroke-width="1.2" fill="none"/>
<path d="M 1771.5 1010.5 H 1779.5" stroke="#333" stroke-width="1.2" fill="none"/>
<path d="M 1790.5 1010.5 H 1880.5" stroke="#333" stroke-width="1.2" fill="none"/>
<rect x="1833" y="1006" width="4.2" height="8.3" fill="#333"/>
<circle cx="1893" cy="1010.3" r="7.3" stroke="#333" stroke-width="1.2" fill="none"/>
<path d="M 1889.5 1010.5 H 1897.5 M 1893.5 1006.5 V 1014.5" stroke="#333" stroke-width="1.2" fill="none"/>
</svg></body></html>
